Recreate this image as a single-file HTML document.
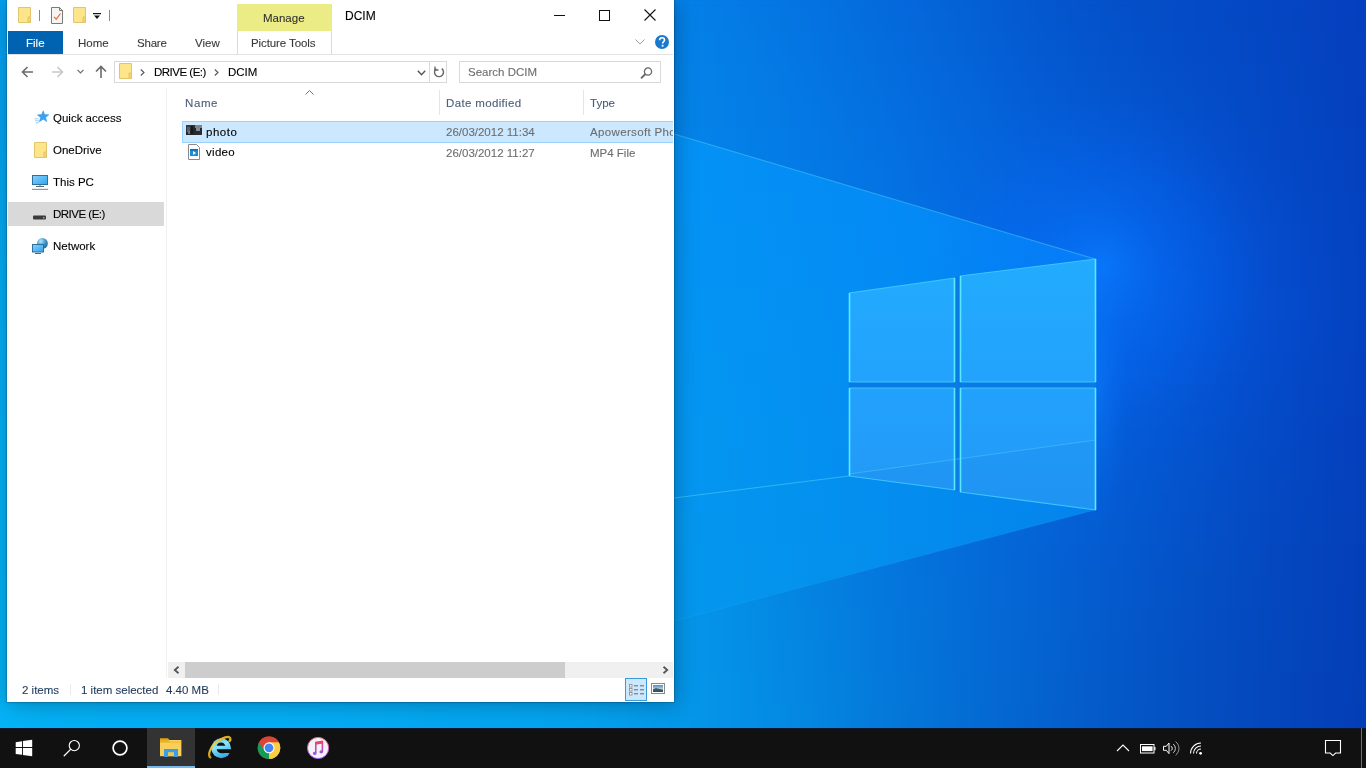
<!DOCTYPE html>
<html><head><meta charset="utf-8">
<style>
*{margin:0;padding:0;box-sizing:border-box}
html,body{width:1366px;height:768px;overflow:hidden;background:#0a7fe0}
body{position:relative;font-family:"Liberation Sans",sans-serif}
.a{position:absolute}
.t{position:absolute;font-family:"Liberation Sans",sans-serif;font-size:11.5px;line-height:14px;white-space:nowrap;-webkit-text-stroke:0.1px currentColor}
svg{position:absolute;overflow:visible}
</style></head><body>

<!-- WALLPAPER -->
<svg id="wp" class="a" style="left:0;top:0" width="1366" height="728" viewBox="0 0 1366 728">
<defs>
<filter id="bf" filterUnits="userSpaceOnUse" x="-100" y="-100" width="1600" height="950" color-interpolation-filters="sRGB"><feGaussianBlur color-interpolation-filters="sRGB" stdDeviation="16"/></filter>
<filter id="b1" filterUnits="userSpaceOnUse" x="-100" y="-100" width="1600" height="950" color-interpolation-filters="sRGB"><feGaussianBlur color-interpolation-filters="sRGB" stdDeviation="0.6"/></filter>
<clipPath id="clipC"><path d="M-10 -69 L1095 259 L1095 510 L674 621 L650 704 L-10 704 Z"/></clipPath>
<linearGradient id="pane" x1="0" y1="259" x2="0" y2="510" gradientUnits="userSpaceOnUse">
<stop offset="0" stop-color="#28acfe"/><stop offset="1" stop-color="#1e9ef8"/></linearGradient>
</defs>
<g filter="url(#bf)">
<rect x="-32" y="-32" width="32" height="32" fill="#04c0ff"/>
<rect x="0" y="-32" width="32" height="32" fill="#04bdff"/>
<rect x="32" y="-32" width="32" height="32" fill="#04baff"/>
<rect x="608" y="-32" width="32" height="32" fill="#0486ea"/>
<rect x="640" y="-32" width="32" height="32" fill="#0483e9"/>
<rect x="672" y="-32" width="32" height="32" fill="#047fe7"/>
<rect x="704" y="-32" width="32" height="32" fill="#047ce5"/>
<rect x="736" y="-32" width="32" height="32" fill="#0478e4"/>
<rect x="768" y="-32" width="32" height="32" fill="#0475e2"/>
<rect x="800" y="-32" width="32" height="32" fill="#0471e0"/>
<rect x="832" y="-32" width="32" height="32" fill="#046ede"/>
<rect x="864" y="-32" width="32" height="32" fill="#046adc"/>
<rect x="896" y="-32" width="32" height="32" fill="#0466da"/>
<rect x="928" y="-32" width="32" height="32" fill="#0462d7"/>
<rect x="960" y="-32" width="32" height="32" fill="#045ed4"/>
<rect x="992" y="-32" width="32" height="32" fill="#045bd1"/>
<rect x="1024" y="-32" width="32" height="32" fill="#0457ce"/>
<rect x="1056" y="-32" width="32" height="32" fill="#0453cb"/>
<rect x="1088" y="-32" width="32" height="32" fill="#0450c9"/>
<rect x="1120" y="-32" width="32" height="32" fill="#044ec7"/>
<rect x="1152" y="-32" width="32" height="32" fill="#044cc6"/>
<rect x="1184" y="-32" width="32" height="32" fill="#044ac5"/>
<rect x="1216" y="-32" width="32" height="32" fill="#0448c4"/>
<rect x="1248" y="-32" width="32" height="32" fill="#0546c3"/>
<rect x="1280" y="-32" width="32" height="32" fill="#0544c1"/>
<rect x="1312" y="-32" width="32" height="32" fill="#0542c0"/>
<rect x="1344" y="-32" width="32" height="32" fill="#053fbe"/>
<rect x="1376" y="-32" width="32" height="32" fill="#053dbd"/>
<rect x="-32" y="0" width="32" height="32" fill="#04c1ff"/>
<rect x="0" y="0" width="32" height="32" fill="#04beff"/>
<rect x="32" y="0" width="32" height="32" fill="#04bbff"/>
<rect x="608" y="0" width="32" height="32" fill="#0486ea"/>
<rect x="640" y="0" width="32" height="32" fill="#0483e9"/>
<rect x="672" y="0" width="32" height="32" fill="#0480e7"/>
<rect x="704" y="0" width="32" height="32" fill="#047de6"/>
<rect x="736" y="0" width="32" height="32" fill="#0479e4"/>
<rect x="768" y="0" width="32" height="32" fill="#0476e2"/>
<rect x="800" y="0" width="32" height="32" fill="#0473e1"/>
<rect x="832" y="0" width="32" height="32" fill="#046fdf"/>
<rect x="864" y="0" width="32" height="32" fill="#046bdd"/>
<rect x="896" y="0" width="32" height="32" fill="#0468db"/>
<rect x="928" y="0" width="32" height="32" fill="#0464d8"/>
<rect x="960" y="0" width="32" height="32" fill="#0460d5"/>
<rect x="992" y="0" width="32" height="32" fill="#045cd2"/>
<rect x="1024" y="0" width="32" height="32" fill="#0458cf"/>
<rect x="1056" y="0" width="32" height="32" fill="#0455cc"/>
<rect x="1088" y="0" width="32" height="32" fill="#0452ca"/>
<rect x="1120" y="0" width="32" height="32" fill="#044fc8"/>
<rect x="1152" y="0" width="32" height="32" fill="#044dc7"/>
<rect x="1184" y="0" width="32" height="32" fill="#044ac6"/>
<rect x="1216" y="0" width="32" height="32" fill="#0448c4"/>
<rect x="1248" y="0" width="32" height="32" fill="#0447c3"/>
<rect x="1280" y="0" width="32" height="32" fill="#0544c1"/>
<rect x="1312" y="0" width="32" height="32" fill="#0542c0"/>
<rect x="1344" y="0" width="32" height="32" fill="#053fbe"/>
<rect x="1376" y="0" width="32" height="32" fill="#053dbc"/>
<rect x="-32" y="32" width="32" height="32" fill="#04c1ff"/>
<rect x="0" y="32" width="32" height="32" fill="#04beff"/>
<rect x="32" y="32" width="32" height="32" fill="#04bbff"/>
<rect x="608" y="32" width="32" height="32" fill="#0487eb"/>
<rect x="640" y="32" width="32" height="32" fill="#0484e9"/>
<rect x="672" y="32" width="32" height="32" fill="#0481e8"/>
<rect x="704" y="32" width="32" height="32" fill="#047ee6"/>
<rect x="736" y="32" width="32" height="32" fill="#047be5"/>
<rect x="768" y="32" width="32" height="32" fill="#0477e3"/>
<rect x="800" y="32" width="32" height="32" fill="#0474e2"/>
<rect x="832" y="32" width="32" height="32" fill="#0470e0"/>
<rect x="864" y="32" width="32" height="32" fill="#046dde"/>
<rect x="896" y="32" width="32" height="32" fill="#0469dc"/>
<rect x="928" y="32" width="32" height="32" fill="#0465d9"/>
<rect x="960" y="32" width="32" height="32" fill="#0461d6"/>
<rect x="992" y="32" width="32" height="32" fill="#045dd4"/>
<rect x="1024" y="32" width="32" height="32" fill="#0459d1"/>
<rect x="1056" y="32" width="32" height="32" fill="#0456ce"/>
<rect x="1088" y="32" width="32" height="32" fill="#0453cc"/>
<rect x="1120" y="32" width="32" height="32" fill="#0450ca"/>
<rect x="1152" y="32" width="32" height="32" fill="#044ec8"/>
<rect x="1184" y="32" width="32" height="32" fill="#044bc7"/>
<rect x="1216" y="32" width="32" height="32" fill="#0449c5"/>
<rect x="1248" y="32" width="32" height="32" fill="#0447c3"/>
<rect x="1280" y="32" width="32" height="32" fill="#0445c2"/>
<rect x="1312" y="32" width="32" height="32" fill="#0542c0"/>
<rect x="1344" y="32" width="32" height="32" fill="#0540be"/>
<rect x="1376" y="32" width="32" height="32" fill="#053dbc"/>
<rect x="-32" y="64" width="32" height="32" fill="#04c1ff"/>
<rect x="0" y="64" width="32" height="32" fill="#04beff"/>
<rect x="32" y="64" width="32" height="32" fill="#04bbff"/>
<rect x="608" y="64" width="32" height="32" fill="#0488eb"/>
<rect x="640" y="64" width="32" height="32" fill="#0485e9"/>
<rect x="672" y="64" width="32" height="32" fill="#0482e8"/>
<rect x="704" y="64" width="32" height="32" fill="#047fe7"/>
<rect x="736" y="64" width="32" height="32" fill="#047ce5"/>
<rect x="768" y="64" width="32" height="32" fill="#0479e4"/>
<rect x="800" y="64" width="32" height="32" fill="#0475e3"/>
<rect x="832" y="64" width="32" height="32" fill="#0472e1"/>
<rect x="864" y="64" width="32" height="32" fill="#046edf"/>
<rect x="896" y="64" width="32" height="32" fill="#046bdd"/>
<rect x="928" y="64" width="32" height="32" fill="#0467db"/>
<rect x="960" y="64" width="32" height="32" fill="#0463d8"/>
<rect x="992" y="64" width="32" height="32" fill="#045fd6"/>
<rect x="1024" y="64" width="32" height="32" fill="#045bd3"/>
<rect x="1056" y="64" width="32" height="32" fill="#0458d0"/>
<rect x="1088" y="64" width="32" height="32" fill="#0455ce"/>
<rect x="1120" y="64" width="32" height="32" fill="#0452cc"/>
<rect x="1152" y="64" width="32" height="32" fill="#044fca"/>
<rect x="1184" y="64" width="32" height="32" fill="#044dc8"/>
<rect x="1216" y="64" width="32" height="32" fill="#044ac6"/>
<rect x="1248" y="64" width="32" height="32" fill="#0448c4"/>
<rect x="1280" y="64" width="32" height="32" fill="#0445c2"/>
<rect x="1312" y="64" width="32" height="32" fill="#0443c0"/>
<rect x="1344" y="64" width="32" height="32" fill="#0540be"/>
<rect x="1376" y="64" width="32" height="32" fill="#053dbc"/>
<rect x="-32" y="96" width="32" height="32" fill="#04c1ff"/>
<rect x="0" y="96" width="32" height="32" fill="#04beff"/>
<rect x="32" y="96" width="32" height="32" fill="#04bcff"/>
<rect x="608" y="96" width="32" height="32" fill="#0488eb"/>
<rect x="640" y="96" width="32" height="32" fill="#0486ea"/>
<rect x="672" y="96" width="32" height="32" fill="#0483e8"/>
<rect x="704" y="96" width="32" height="32" fill="#0480e7"/>
<rect x="736" y="96" width="32" height="32" fill="#047de6"/>
<rect x="768" y="96" width="32" height="32" fill="#047ae5"/>
<rect x="800" y="96" width="32" height="32" fill="#0477e4"/>
<rect x="832" y="96" width="32" height="32" fill="#0473e2"/>
<rect x="864" y="96" width="32" height="32" fill="#0470e1"/>
<rect x="896" y="96" width="32" height="32" fill="#046cdf"/>
<rect x="928" y="96" width="32" height="32" fill="#0468dd"/>
<rect x="960" y="96" width="32" height="32" fill="#0465da"/>
<rect x="992" y="96" width="32" height="32" fill="#0461d8"/>
<rect x="1024" y="96" width="32" height="32" fill="#045dd6"/>
<rect x="1056" y="96" width="32" height="32" fill="#045ad4"/>
<rect x="1088" y="96" width="32" height="32" fill="#0457d1"/>
<rect x="1120" y="96" width="32" height="32" fill="#0454cf"/>
<rect x="1152" y="96" width="32" height="32" fill="#0451cd"/>
<rect x="1184" y="96" width="32" height="32" fill="#044eca"/>
<rect x="1216" y="96" width="32" height="32" fill="#044bc8"/>
<rect x="1248" y="96" width="32" height="32" fill="#0448c5"/>
<rect x="1280" y="96" width="32" height="32" fill="#0446c3"/>
<rect x="1312" y="96" width="32" height="32" fill="#0443c0"/>
<rect x="1344" y="96" width="32" height="32" fill="#0440be"/>
<rect x="1376" y="96" width="32" height="32" fill="#043ebc"/>
<rect x="-32" y="128" width="32" height="32" fill="#04c2ff"/>
<rect x="0" y="128" width="32" height="32" fill="#04bfff"/>
<rect x="32" y="128" width="32" height="32" fill="#04bcff"/>
<rect x="608" y="128" width="32" height="32" fill="#0489eb"/>
<rect x="640" y="128" width="32" height="32" fill="#0486ea"/>
<rect x="672" y="128" width="32" height="32" fill="#0483e9"/>
<rect x="704" y="128" width="32" height="32" fill="#0481e8"/>
<rect x="736" y="128" width="32" height="32" fill="#047ee7"/>
<rect x="768" y="128" width="32" height="32" fill="#047be6"/>
<rect x="800" y="128" width="32" height="32" fill="#0478e5"/>
<rect x="832" y="128" width="32" height="32" fill="#0475e3"/>
<rect x="864" y="128" width="32" height="32" fill="#0471e2"/>
<rect x="896" y="128" width="32" height="32" fill="#046ee0"/>
<rect x="928" y="128" width="32" height="32" fill="#046ade"/>
<rect x="960" y="128" width="32" height="32" fill="#0466dc"/>
<rect x="992" y="128" width="32" height="32" fill="#0463db"/>
<rect x="1024" y="128" width="32" height="32" fill="#045fd9"/>
<rect x="1056" y="128" width="32" height="32" fill="#045cd7"/>
<rect x="1088" y="128" width="32" height="32" fill="#0459d5"/>
<rect x="1120" y="128" width="32" height="32" fill="#0456d3"/>
<rect x="1152" y="128" width="32" height="32" fill="#0453d0"/>
<rect x="1184" y="128" width="32" height="32" fill="#0450cd"/>
<rect x="1216" y="128" width="32" height="32" fill="#044cca"/>
<rect x="1248" y="128" width="32" height="32" fill="#0449c7"/>
<rect x="1280" y="128" width="32" height="32" fill="#0446c4"/>
<rect x="1312" y="128" width="32" height="32" fill="#0444c1"/>
<rect x="1344" y="128" width="32" height="32" fill="#0441be"/>
<rect x="1376" y="128" width="32" height="32" fill="#043ebc"/>
<rect x="-32" y="160" width="32" height="32" fill="#04c2ff"/>
<rect x="0" y="160" width="32" height="32" fill="#04bfff"/>
<rect x="32" y="160" width="32" height="32" fill="#04bcff"/>
<rect x="608" y="160" width="32" height="32" fill="#048aeb"/>
<rect x="640" y="160" width="32" height="32" fill="#0487ea"/>
<rect x="672" y="160" width="32" height="32" fill="#0484e9"/>
<rect x="704" y="160" width="32" height="32" fill="#0481e8"/>
<rect x="736" y="160" width="32" height="32" fill="#047fe7"/>
<rect x="768" y="160" width="32" height="32" fill="#047ce6"/>
<rect x="800" y="160" width="32" height="32" fill="#0479e5"/>
<rect x="832" y="160" width="32" height="32" fill="#0476e4"/>
<rect x="864" y="160" width="32" height="32" fill="#0473e3"/>
<rect x="896" y="160" width="32" height="32" fill="#046fe1"/>
<rect x="928" y="160" width="32" height="32" fill="#046be0"/>
<rect x="960" y="160" width="32" height="32" fill="#0468de"/>
<rect x="992" y="160" width="32" height="32" fill="#0464dd"/>
<rect x="1024" y="160" width="32" height="32" fill="#0461dc"/>
<rect x="1056" y="160" width="32" height="32" fill="#045edb"/>
<rect x="1088" y="160" width="32" height="32" fill="#045bda"/>
<rect x="1120" y="160" width="32" height="32" fill="#0458d7"/>
<rect x="1152" y="160" width="32" height="32" fill="#0455d4"/>
<rect x="1184" y="160" width="32" height="32" fill="#0451d1"/>
<rect x="1216" y="160" width="32" height="32" fill="#044ecd"/>
<rect x="1248" y="160" width="32" height="32" fill="#044ac9"/>
<rect x="1280" y="160" width="32" height="32" fill="#0447c5"/>
<rect x="1312" y="160" width="32" height="32" fill="#0444c2"/>
<rect x="1344" y="160" width="32" height="32" fill="#0441bf"/>
<rect x="1376" y="160" width="32" height="32" fill="#043ebc"/>
<rect x="-32" y="192" width="32" height="32" fill="#04c2ff"/>
<rect x="0" y="192" width="32" height="32" fill="#04bfff"/>
<rect x="32" y="192" width="32" height="32" fill="#04bcff"/>
<rect x="608" y="192" width="32" height="32" fill="#048aeb"/>
<rect x="640" y="192" width="32" height="32" fill="#0488ea"/>
<rect x="672" y="192" width="32" height="32" fill="#0485e9"/>
<rect x="704" y="192" width="32" height="32" fill="#0482e8"/>
<rect x="736" y="192" width="32" height="32" fill="#0480e8"/>
<rect x="768" y="192" width="32" height="32" fill="#047de7"/>
<rect x="800" y="192" width="32" height="32" fill="#047ae6"/>
<rect x="832" y="192" width="32" height="32" fill="#0477e5"/>
<rect x="864" y="192" width="32" height="32" fill="#0474e4"/>
<rect x="896" y="192" width="32" height="32" fill="#0470e2"/>
<rect x="928" y="192" width="32" height="32" fill="#046de1"/>
<rect x="960" y="192" width="32" height="32" fill="#0469e1"/>
<rect x="992" y="192" width="32" height="32" fill="#0466e0"/>
<rect x="1024" y="192" width="32" height="32" fill="#0463e0"/>
<rect x="1056" y="192" width="32" height="32" fill="#0461df"/>
<rect x="1088" y="192" width="32" height="32" fill="#045ede"/>
<rect x="1120" y="192" width="32" height="32" fill="#045adb"/>
<rect x="1152" y="192" width="32" height="32" fill="#0457d8"/>
<rect x="1184" y="192" width="32" height="32" fill="#0453d4"/>
<rect x="1216" y="192" width="32" height="32" fill="#044fcf"/>
<rect x="1248" y="192" width="32" height="32" fill="#044ccb"/>
<rect x="1280" y="192" width="32" height="32" fill="#0448c7"/>
<rect x="1312" y="192" width="32" height="32" fill="#0445c3"/>
<rect x="1344" y="192" width="32" height="32" fill="#0442bf"/>
<rect x="1376" y="192" width="32" height="32" fill="#043fbc"/>
<rect x="-32" y="224" width="32" height="32" fill="#04c3ff"/>
<rect x="0" y="224" width="32" height="32" fill="#04c0ff"/>
<rect x="32" y="224" width="32" height="32" fill="#04bdff"/>
<rect x="608" y="224" width="32" height="32" fill="#048beb"/>
<rect x="640" y="224" width="32" height="32" fill="#0488ea"/>
<rect x="672" y="224" width="32" height="32" fill="#0486ea"/>
<rect x="704" y="224" width="32" height="32" fill="#0483e9"/>
<rect x="736" y="224" width="32" height="32" fill="#0480e8"/>
<rect x="768" y="224" width="32" height="32" fill="#047ee7"/>
<rect x="800" y="224" width="32" height="32" fill="#047be6"/>
<rect x="832" y="224" width="32" height="32" fill="#0478e5"/>
<rect x="864" y="224" width="32" height="32" fill="#0474e4"/>
<rect x="896" y="224" width="32" height="32" fill="#0471e3"/>
<rect x="928" y="224" width="32" height="32" fill="#046ee3"/>
<rect x="960" y="224" width="32" height="32" fill="#046be3"/>
<rect x="992" y="224" width="32" height="32" fill="#0468e3"/>
<rect x="1024" y="224" width="32" height="32" fill="#0465e3"/>
<rect x="1056" y="224" width="32" height="32" fill="#0463e3"/>
<rect x="1088" y="224" width="32" height="32" fill="#0460e1"/>
<rect x="1120" y="224" width="32" height="32" fill="#045cdf"/>
<rect x="1152" y="224" width="32" height="32" fill="#0458db"/>
<rect x="1184" y="224" width="32" height="32" fill="#0454d7"/>
<rect x="1216" y="224" width="32" height="32" fill="#0451d2"/>
<rect x="1248" y="224" width="32" height="32" fill="#044dcd"/>
<rect x="1280" y="224" width="32" height="32" fill="#0449c8"/>
<rect x="1312" y="224" width="32" height="32" fill="#0445c4"/>
<rect x="1344" y="224" width="32" height="32" fill="#0442c0"/>
<rect x="1376" y="224" width="32" height="32" fill="#043fbd"/>
<rect x="-32" y="256" width="32" height="32" fill="#04c3ff"/>
<rect x="0" y="256" width="32" height="32" fill="#04c0ff"/>
<rect x="32" y="256" width="32" height="32" fill="#04bdff"/>
<rect x="608" y="256" width="32" height="32" fill="#048beb"/>
<rect x="640" y="256" width="32" height="32" fill="#0489ea"/>
<rect x="672" y="256" width="32" height="32" fill="#0486ea"/>
<rect x="704" y="256" width="32" height="32" fill="#0484e9"/>
<rect x="736" y="256" width="32" height="32" fill="#0481e8"/>
<rect x="768" y="256" width="32" height="32" fill="#047ee7"/>
<rect x="800" y="256" width="32" height="32" fill="#047be7"/>
<rect x="832" y="256" width="32" height="32" fill="#0478e6"/>
<rect x="864" y="256" width="32" height="32" fill="#0475e5"/>
<rect x="896" y="256" width="32" height="32" fill="#0472e4"/>
<rect x="928" y="256" width="32" height="32" fill="#046fe4"/>
<rect x="960" y="256" width="32" height="32" fill="#046ce5"/>
<rect x="992" y="256" width="32" height="32" fill="#046ae6"/>
<rect x="1024" y="256" width="32" height="32" fill="#0467e6"/>
<rect x="1056" y="256" width="32" height="32" fill="#0464e5"/>
<rect x="1088" y="256" width="32" height="32" fill="#0461e4"/>
<rect x="1120" y="256" width="32" height="32" fill="#045de1"/>
<rect x="1152" y="256" width="32" height="32" fill="#045add"/>
<rect x="1184" y="256" width="32" height="32" fill="#0456d9"/>
<rect x="1216" y="256" width="32" height="32" fill="#0451d4"/>
<rect x="1248" y="256" width="32" height="32" fill="#044dce"/>
<rect x="1280" y="256" width="32" height="32" fill="#0449c9"/>
<rect x="1312" y="256" width="32" height="32" fill="#0446c5"/>
<rect x="1344" y="256" width="32" height="32" fill="#0442c0"/>
<rect x="1376" y="256" width="32" height="32" fill="#043fbd"/>
<rect x="-32" y="288" width="32" height="32" fill="#04c3ff"/>
<rect x="0" y="288" width="32" height="32" fill="#04c0ff"/>
<rect x="32" y="288" width="32" height="32" fill="#04bdff"/>
<rect x="608" y="288" width="32" height="32" fill="#048ceb"/>
<rect x="640" y="288" width="32" height="32" fill="#0489ea"/>
<rect x="672" y="288" width="32" height="32" fill="#0487ea"/>
<rect x="704" y="288" width="32" height="32" fill="#0484e9"/>
<rect x="736" y="288" width="32" height="32" fill="#0481e8"/>
<rect x="768" y="288" width="32" height="32" fill="#047fe7"/>
<rect x="800" y="288" width="32" height="32" fill="#047ce7"/>
<rect x="832" y="288" width="32" height="32" fill="#0479e6"/>
<rect x="864" y="288" width="32" height="32" fill="#0476e5"/>
<rect x="896" y="288" width="32" height="32" fill="#0473e5"/>
<rect x="928" y="288" width="32" height="32" fill="#0470e6"/>
<rect x="960" y="288" width="32" height="32" fill="#046de7"/>
<rect x="992" y="288" width="32" height="32" fill="#046be8"/>
<rect x="1024" y="288" width="32" height="32" fill="#0468e8"/>
<rect x="1056" y="288" width="32" height="32" fill="#0465e6"/>
<rect x="1088" y="288" width="32" height="32" fill="#0462e4"/>
<rect x="1120" y="288" width="32" height="32" fill="#045ee1"/>
<rect x="1152" y="288" width="32" height="32" fill="#045add"/>
<rect x="1184" y="288" width="32" height="32" fill="#0456d9"/>
<rect x="1216" y="288" width="32" height="32" fill="#0452d4"/>
<rect x="1248" y="288" width="32" height="32" fill="#044ecf"/>
<rect x="1280" y="288" width="32" height="32" fill="#044aca"/>
<rect x="1312" y="288" width="32" height="32" fill="#0446c5"/>
<rect x="1344" y="288" width="32" height="32" fill="#0442c1"/>
<rect x="1376" y="288" width="32" height="32" fill="#043fbd"/>
<rect x="-32" y="320" width="32" height="32" fill="#04c3ff"/>
<rect x="0" y="320" width="32" height="32" fill="#04c0ff"/>
<rect x="32" y="320" width="32" height="32" fill="#04bdff"/>
<rect x="608" y="320" width="32" height="32" fill="#048ceb"/>
<rect x="640" y="320" width="32" height="32" fill="#0489ea"/>
<rect x="672" y="320" width="32" height="32" fill="#0487e9"/>
<rect x="704" y="320" width="32" height="32" fill="#0484e9"/>
<rect x="736" y="320" width="32" height="32" fill="#0482e8"/>
<rect x="768" y="320" width="32" height="32" fill="#047fe7"/>
<rect x="800" y="320" width="32" height="32" fill="#047ce6"/>
<rect x="832" y="320" width="32" height="32" fill="#0479e6"/>
<rect x="864" y="320" width="32" height="32" fill="#0476e5"/>
<rect x="896" y="320" width="32" height="32" fill="#0473e6"/>
<rect x="928" y="320" width="32" height="32" fill="#0470e7"/>
<rect x="960" y="320" width="32" height="32" fill="#046ee8"/>
<rect x="992" y="320" width="32" height="32" fill="#046be8"/>
<rect x="1024" y="320" width="32" height="32" fill="#0468e7"/>
<rect x="1056" y="320" width="32" height="32" fill="#0465e6"/>
<rect x="1088" y="320" width="32" height="32" fill="#0462e3"/>
<rect x="1120" y="320" width="32" height="32" fill="#045ee0"/>
<rect x="1152" y="320" width="32" height="32" fill="#045adc"/>
<rect x="1184" y="320" width="32" height="32" fill="#0456d8"/>
<rect x="1216" y="320" width="32" height="32" fill="#0451d3"/>
<rect x="1248" y="320" width="32" height="32" fill="#044dce"/>
<rect x="1280" y="320" width="32" height="32" fill="#0449c9"/>
<rect x="1312" y="320" width="32" height="32" fill="#0445c5"/>
<rect x="1344" y="320" width="32" height="32" fill="#0442c1"/>
<rect x="1376" y="320" width="32" height="32" fill="#043fbd"/>
<rect x="-32" y="352" width="32" height="32" fill="#04c3ff"/>
<rect x="0" y="352" width="32" height="32" fill="#04c0ff"/>
<rect x="32" y="352" width="32" height="32" fill="#04bdff"/>
<rect x="608" y="352" width="32" height="32" fill="#048dea"/>
<rect x="640" y="352" width="32" height="32" fill="#048bea"/>
<rect x="672" y="352" width="32" height="32" fill="#0488e9"/>
<rect x="704" y="352" width="32" height="32" fill="#0485e8"/>
<rect x="736" y="352" width="32" height="32" fill="#0482e7"/>
<rect x="768" y="352" width="32" height="32" fill="#047fe6"/>
<rect x="800" y="352" width="32" height="32" fill="#047ce6"/>
<rect x="832" y="352" width="32" height="32" fill="#0479e5"/>
<rect x="864" y="352" width="32" height="32" fill="#0476e5"/>
<rect x="896" y="352" width="32" height="32" fill="#0473e5"/>
<rect x="928" y="352" width="32" height="32" fill="#0470e6"/>
<rect x="960" y="352" width="32" height="32" fill="#046de6"/>
<rect x="992" y="352" width="32" height="32" fill="#046ae6"/>
<rect x="1024" y="352" width="32" height="32" fill="#0467e5"/>
<rect x="1056" y="352" width="32" height="32" fill="#0464e3"/>
<rect x="1088" y="352" width="32" height="32" fill="#0461e1"/>
<rect x="1120" y="352" width="32" height="32" fill="#045dde"/>
<rect x="1152" y="352" width="32" height="32" fill="#0459da"/>
<rect x="1184" y="352" width="32" height="32" fill="#0455d5"/>
<rect x="1216" y="352" width="32" height="32" fill="#0451d1"/>
<rect x="1248" y="352" width="32" height="32" fill="#044ccc"/>
<rect x="1280" y="352" width="32" height="32" fill="#0448c7"/>
<rect x="1312" y="352" width="32" height="32" fill="#0445c3"/>
<rect x="1344" y="352" width="32" height="32" fill="#0441c0"/>
<rect x="1376" y="352" width="32" height="32" fill="#043ebd"/>
<rect x="-32" y="384" width="32" height="32" fill="#04c1ff"/>
<rect x="0" y="384" width="32" height="32" fill="#04beff"/>
<rect x="32" y="384" width="32" height="32" fill="#04bbff"/>
<rect x="608" y="384" width="32" height="32" fill="#0491eb"/>
<rect x="640" y="384" width="32" height="32" fill="#048eea"/>
<rect x="672" y="384" width="32" height="32" fill="#048be9"/>
<rect x="704" y="384" width="32" height="32" fill="#0488e8"/>
<rect x="736" y="384" width="32" height="32" fill="#0484e6"/>
<rect x="768" y="384" width="32" height="32" fill="#0480e5"/>
<rect x="800" y="384" width="32" height="32" fill="#047de4"/>
<rect x="832" y="384" width="32" height="32" fill="#0479e3"/>
<rect x="864" y="384" width="32" height="32" fill="#0476e3"/>
<rect x="896" y="384" width="32" height="32" fill="#0473e3"/>
<rect x="928" y="384" width="32" height="32" fill="#046fe3"/>
<rect x="960" y="384" width="32" height="32" fill="#046ce3"/>
<rect x="992" y="384" width="32" height="32" fill="#0469e3"/>
<rect x="1024" y="384" width="32" height="32" fill="#0466e1"/>
<rect x="1056" y="384" width="32" height="32" fill="#0463e0"/>
<rect x="1088" y="384" width="32" height="32" fill="#045fdd"/>
<rect x="1120" y="384" width="32" height="32" fill="#045cda"/>
<rect x="1152" y="384" width="32" height="32" fill="#0458d6"/>
<rect x="1184" y="384" width="32" height="32" fill="#0454d2"/>
<rect x="1216" y="384" width="32" height="32" fill="#044fce"/>
<rect x="1248" y="384" width="32" height="32" fill="#044bc9"/>
<rect x="1280" y="384" width="32" height="32" fill="#0448c5"/>
<rect x="1312" y="384" width="32" height="32" fill="#0444c2"/>
<rect x="1344" y="384" width="32" height="32" fill="#0441bf"/>
<rect x="1376" y="384" width="32" height="32" fill="#043dbc"/>
<rect x="-32" y="416" width="32" height="32" fill="#04bdff"/>
<rect x="0" y="416" width="32" height="32" fill="#04baff"/>
<rect x="32" y="416" width="32" height="32" fill="#04b7fe"/>
<rect x="608" y="416" width="32" height="32" fill="#0494ec"/>
<rect x="640" y="416" width="32" height="32" fill="#0492eb"/>
<rect x="672" y="416" width="32" height="32" fill="#048ee9"/>
<rect x="704" y="416" width="32" height="32" fill="#048be8"/>
<rect x="736" y="416" width="32" height="32" fill="#0486e6"/>
<rect x="768" y="416" width="32" height="32" fill="#0482e4"/>
<rect x="800" y="416" width="32" height="32" fill="#047ee3"/>
<rect x="832" y="416" width="32" height="32" fill="#047ae2"/>
<rect x="864" y="416" width="32" height="32" fill="#0476e1"/>
<rect x="896" y="416" width="32" height="32" fill="#0472e0"/>
<rect x="928" y="416" width="32" height="32" fill="#046fe0"/>
<rect x="960" y="416" width="32" height="32" fill="#046ce0"/>
<rect x="992" y="416" width="32" height="32" fill="#0468df"/>
<rect x="1024" y="416" width="32" height="32" fill="#0465de"/>
<rect x="1056" y="416" width="32" height="32" fill="#0462dc"/>
<rect x="1088" y="416" width="32" height="32" fill="#045ed9"/>
<rect x="1120" y="416" width="32" height="32" fill="#045ad6"/>
<rect x="1152" y="416" width="32" height="32" fill="#0456d3"/>
<rect x="1184" y="416" width="32" height="32" fill="#0452cf"/>
<rect x="1216" y="416" width="32" height="32" fill="#044ecb"/>
<rect x="1248" y="416" width="32" height="32" fill="#044bc7"/>
<rect x="1280" y="416" width="32" height="32" fill="#0447c3"/>
<rect x="1312" y="416" width="32" height="32" fill="#0443c0"/>
<rect x="1344" y="416" width="32" height="32" fill="#0440be"/>
<rect x="1376" y="416" width="32" height="32" fill="#043dbb"/>
<rect x="-32" y="448" width="32" height="32" fill="#04b9fd"/>
<rect x="0" y="448" width="32" height="32" fill="#04b5fc"/>
<rect x="32" y="448" width="32" height="32" fill="#04b3fb"/>
<rect x="608" y="448" width="32" height="32" fill="#0497ed"/>
<rect x="640" y="448" width="32" height="32" fill="#0494eb"/>
<rect x="672" y="448" width="32" height="32" fill="#0491e9"/>
<rect x="704" y="448" width="32" height="32" fill="#048de8"/>
<rect x="736" y="448" width="32" height="32" fill="#0488e6"/>
<rect x="768" y="448" width="32" height="32" fill="#0483e4"/>
<rect x="800" y="448" width="32" height="32" fill="#047fe2"/>
<rect x="832" y="448" width="32" height="32" fill="#047ae1"/>
<rect x="864" y="448" width="32" height="32" fill="#0476e0"/>
<rect x="896" y="448" width="32" height="32" fill="#0472df"/>
<rect x="928" y="448" width="32" height="32" fill="#046fde"/>
<rect x="960" y="448" width="32" height="32" fill="#046bdd"/>
<rect x="992" y="448" width="32" height="32" fill="#0468dc"/>
<rect x="1024" y="448" width="32" height="32" fill="#0464da"/>
<rect x="1056" y="448" width="32" height="32" fill="#0461d8"/>
<rect x="1088" y="448" width="32" height="32" fill="#045dd6"/>
<rect x="1120" y="448" width="32" height="32" fill="#0459d3"/>
<rect x="1152" y="448" width="32" height="32" fill="#0455d0"/>
<rect x="1184" y="448" width="32" height="32" fill="#0452cc"/>
<rect x="1216" y="448" width="32" height="32" fill="#044ec8"/>
<rect x="1248" y="448" width="32" height="32" fill="#044ac5"/>
<rect x="1280" y="448" width="32" height="32" fill="#0447c2"/>
<rect x="1312" y="448" width="32" height="32" fill="#0443bf"/>
<rect x="1344" y="448" width="32" height="32" fill="#0440bc"/>
<rect x="1376" y="448" width="32" height="32" fill="#043dba"/>
<rect x="-32" y="480" width="32" height="32" fill="#04b5fb"/>
<rect x="0" y="480" width="32" height="32" fill="#04b3f9"/>
<rect x="32" y="480" width="32" height="32" fill="#04b0f8"/>
<rect x="608" y="480" width="32" height="32" fill="#0499ed"/>
<rect x="640" y="480" width="32" height="32" fill="#0496eb"/>
<rect x="672" y="480" width="32" height="32" fill="#0492ea"/>
<rect x="704" y="480" width="32" height="32" fill="#048ee8"/>
<rect x="736" y="480" width="32" height="32" fill="#0489e6"/>
<rect x="768" y="480" width="32" height="32" fill="#0484e4"/>
<rect x="800" y="480" width="32" height="32" fill="#047fe2"/>
<rect x="832" y="480" width="32" height="32" fill="#047be0"/>
<rect x="864" y="480" width="32" height="32" fill="#0477df"/>
<rect x="896" y="480" width="32" height="32" fill="#0473dd"/>
<rect x="928" y="480" width="32" height="32" fill="#046fdc"/>
<rect x="960" y="480" width="32" height="32" fill="#046bdb"/>
<rect x="992" y="480" width="32" height="32" fill="#0467d9"/>
<rect x="1024" y="480" width="32" height="32" fill="#0464d8"/>
<rect x="1056" y="480" width="32" height="32" fill="#0460d6"/>
<rect x="1088" y="480" width="32" height="32" fill="#045cd3"/>
<rect x="1120" y="480" width="32" height="32" fill="#0458d0"/>
<rect x="1152" y="480" width="32" height="32" fill="#0455cd"/>
<rect x="1184" y="480" width="32" height="32" fill="#0451ca"/>
<rect x="1216" y="480" width="32" height="32" fill="#044dc6"/>
<rect x="1248" y="480" width="32" height="32" fill="#044ac3"/>
<rect x="1280" y="480" width="32" height="32" fill="#0446c0"/>
<rect x="1312" y="480" width="32" height="32" fill="#0443be"/>
<rect x="1344" y="480" width="32" height="32" fill="#0440bb"/>
<rect x="1376" y="480" width="32" height="32" fill="#043db9"/>
<rect x="-32" y="512" width="32" height="32" fill="#04b4f9"/>
<rect x="0" y="512" width="32" height="32" fill="#04b1f8"/>
<rect x="32" y="512" width="32" height="32" fill="#04aff7"/>
<rect x="608" y="512" width="32" height="32" fill="#049aed"/>
<rect x="640" y="512" width="32" height="32" fill="#0497eb"/>
<rect x="672" y="512" width="32" height="32" fill="#0493e9"/>
<rect x="704" y="512" width="32" height="32" fill="#048fe8"/>
<rect x="736" y="512" width="32" height="32" fill="#048ae6"/>
<rect x="768" y="512" width="32" height="32" fill="#0485e4"/>
<rect x="800" y="512" width="32" height="32" fill="#0480e2"/>
<rect x="832" y="512" width="32" height="32" fill="#047ce0"/>
<rect x="864" y="512" width="32" height="32" fill="#0477de"/>
<rect x="896" y="512" width="32" height="32" fill="#0473dd"/>
<rect x="928" y="512" width="32" height="32" fill="#046fdb"/>
<rect x="960" y="512" width="32" height="32" fill="#046bd9"/>
<rect x="992" y="512" width="32" height="32" fill="#0467d8"/>
<rect x="1024" y="512" width="32" height="32" fill="#0464d6"/>
<rect x="1056" y="512" width="32" height="32" fill="#0460d4"/>
<rect x="1088" y="512" width="32" height="32" fill="#045cd1"/>
<rect x="1120" y="512" width="32" height="32" fill="#0458ce"/>
<rect x="1152" y="512" width="32" height="32" fill="#0454cb"/>
<rect x="1184" y="512" width="32" height="32" fill="#0450c8"/>
<rect x="1216" y="512" width="32" height="32" fill="#044dc5"/>
<rect x="1248" y="512" width="32" height="32" fill="#0449c2"/>
<rect x="1280" y="512" width="32" height="32" fill="#0446bf"/>
<rect x="1312" y="512" width="32" height="32" fill="#0443bd"/>
<rect x="1344" y="512" width="32" height="32" fill="#0440ba"/>
<rect x="1376" y="512" width="32" height="32" fill="#043db9"/>
<rect x="-32" y="544" width="32" height="32" fill="#04b3f8"/>
<rect x="0" y="544" width="32" height="32" fill="#04b1f7"/>
<rect x="32" y="544" width="32" height="32" fill="#04aff6"/>
<rect x="608" y="544" width="32" height="32" fill="#049bed"/>
<rect x="640" y="544" width="32" height="32" fill="#0497eb"/>
<rect x="672" y="544" width="32" height="32" fill="#0494e9"/>
<rect x="704" y="544" width="32" height="32" fill="#0490e8"/>
<rect x="736" y="544" width="32" height="32" fill="#048be6"/>
<rect x="768" y="544" width="32" height="32" fill="#0486e4"/>
<rect x="800" y="544" width="32" height="32" fill="#0481e2"/>
<rect x="832" y="544" width="32" height="32" fill="#047ce0"/>
<rect x="864" y="544" width="32" height="32" fill="#0478de"/>
<rect x="896" y="544" width="32" height="32" fill="#0473dc"/>
<rect x="928" y="544" width="32" height="32" fill="#046fda"/>
<rect x="960" y="544" width="32" height="32" fill="#046bd8"/>
<rect x="992" y="544" width="32" height="32" fill="#0467d6"/>
<rect x="1024" y="544" width="32" height="32" fill="#0463d4"/>
<rect x="1056" y="544" width="32" height="32" fill="#045fd2"/>
<rect x="1088" y="544" width="32" height="32" fill="#045bcf"/>
<rect x="1120" y="544" width="32" height="32" fill="#0457cc"/>
<rect x="1152" y="544" width="32" height="32" fill="#0453c9"/>
<rect x="1184" y="544" width="32" height="32" fill="#0450c6"/>
<rect x="1216" y="544" width="32" height="32" fill="#044cc3"/>
<rect x="1248" y="544" width="32" height="32" fill="#0449c0"/>
<rect x="1280" y="544" width="32" height="32" fill="#0445be"/>
<rect x="1312" y="544" width="32" height="32" fill="#0442bb"/>
<rect x="1344" y="544" width="32" height="32" fill="#043fb9"/>
<rect x="1376" y="544" width="32" height="32" fill="#043cb8"/>
<rect x="-32" y="576" width="32" height="32" fill="#04b3f7"/>
<rect x="0" y="576" width="32" height="32" fill="#04b1f6"/>
<rect x="32" y="576" width="32" height="32" fill="#04aff6"/>
<rect x="608" y="576" width="32" height="32" fill="#049ced"/>
<rect x="640" y="576" width="32" height="32" fill="#0498eb"/>
<rect x="672" y="576" width="32" height="32" fill="#0494e9"/>
<rect x="704" y="576" width="32" height="32" fill="#0490e7"/>
<rect x="736" y="576" width="32" height="32" fill="#048ce5"/>
<rect x="768" y="576" width="32" height="32" fill="#0487e3"/>
<rect x="800" y="576" width="32" height="32" fill="#0482e1"/>
<rect x="832" y="576" width="32" height="32" fill="#047ddf"/>
<rect x="864" y="576" width="32" height="32" fill="#0478dd"/>
<rect x="896" y="576" width="32" height="32" fill="#0474db"/>
<rect x="928" y="576" width="32" height="32" fill="#0470d9"/>
<rect x="960" y="576" width="32" height="32" fill="#046bd7"/>
<rect x="992" y="576" width="32" height="32" fill="#0467d5"/>
<rect x="1024" y="576" width="32" height="32" fill="#0463d3"/>
<rect x="1056" y="576" width="32" height="32" fill="#045fd0"/>
<rect x="1088" y="576" width="32" height="32" fill="#045bcd"/>
<rect x="1120" y="576" width="32" height="32" fill="#0457ca"/>
<rect x="1152" y="576" width="32" height="32" fill="#0453c7"/>
<rect x="1184" y="576" width="32" height="32" fill="#044fc4"/>
<rect x="1216" y="576" width="32" height="32" fill="#044cc1"/>
<rect x="1248" y="576" width="32" height="32" fill="#0448bf"/>
<rect x="1280" y="576" width="32" height="32" fill="#0445bd"/>
<rect x="1312" y="576" width="32" height="32" fill="#0442ba"/>
<rect x="1344" y="576" width="32" height="32" fill="#043fb8"/>
<rect x="1376" y="576" width="32" height="32" fill="#043cb7"/>
<rect x="-32" y="608" width="32" height="32" fill="#04b3f7"/>
<rect x="0" y="608" width="32" height="32" fill="#04b1f6"/>
<rect x="32" y="608" width="32" height="32" fill="#04aff5"/>
<rect x="608" y="608" width="32" height="32" fill="#049ced"/>
<rect x="640" y="608" width="32" height="32" fill="#0499eb"/>
<rect x="672" y="608" width="32" height="32" fill="#0495e9"/>
<rect x="704" y="608" width="32" height="32" fill="#0491e7"/>
<rect x="736" y="608" width="32" height="32" fill="#048de5"/>
<rect x="768" y="608" width="32" height="32" fill="#0488e3"/>
<rect x="800" y="608" width="32" height="32" fill="#0483e1"/>
<rect x="832" y="608" width="32" height="32" fill="#047edf"/>
<rect x="864" y="608" width="32" height="32" fill="#0479dd"/>
<rect x="896" y="608" width="32" height="32" fill="#0474da"/>
<rect x="928" y="608" width="32" height="32" fill="#0470d8"/>
<rect x="960" y="608" width="32" height="32" fill="#046bd6"/>
<rect x="992" y="608" width="32" height="32" fill="#0467d4"/>
<rect x="1024" y="608" width="32" height="32" fill="#0463d2"/>
<rect x="1056" y="608" width="32" height="32" fill="#045fcf"/>
<rect x="1088" y="608" width="32" height="32" fill="#045bcc"/>
<rect x="1120" y="608" width="32" height="32" fill="#0456c9"/>
<rect x="1152" y="608" width="32" height="32" fill="#0452c6"/>
<rect x="1184" y="608" width="32" height="32" fill="#044fc3"/>
<rect x="1216" y="608" width="32" height="32" fill="#044bc0"/>
<rect x="1248" y="608" width="32" height="32" fill="#0448be"/>
<rect x="1280" y="608" width="32" height="32" fill="#0445bc"/>
<rect x="1312" y="608" width="32" height="32" fill="#0442ba"/>
<rect x="1344" y="608" width="32" height="32" fill="#043fb8"/>
<rect x="1376" y="608" width="32" height="32" fill="#043cb6"/>
<rect x="-32" y="640" width="32" height="32" fill="#04b3f6"/>
<rect x="0" y="640" width="32" height="32" fill="#04b1f6"/>
<rect x="32" y="640" width="32" height="32" fill="#04aff5"/>
<rect x="64" y="640" width="32" height="32" fill="#04aef5"/>
<rect x="96" y="640" width="32" height="32" fill="#04adf5"/>
<rect x="128" y="640" width="32" height="32" fill="#04adf5"/>
<rect x="160" y="640" width="32" height="32" fill="#04adf5"/>
<rect x="192" y="640" width="32" height="32" fill="#04aef5"/>
<rect x="224" y="640" width="32" height="32" fill="#04aef6"/>
<rect x="256" y="640" width="32" height="32" fill="#04adf5"/>
<rect x="288" y="640" width="32" height="32" fill="#04acf5"/>
<rect x="320" y="640" width="32" height="32" fill="#04abf4"/>
<rect x="352" y="640" width="32" height="32" fill="#04aaf4"/>
<rect x="384" y="640" width="32" height="32" fill="#04a8f3"/>
<rect x="416" y="640" width="32" height="32" fill="#04a6f2"/>
<rect x="448" y="640" width="32" height="32" fill="#04a5f1"/>
<rect x="480" y="640" width="32" height="32" fill="#04a5f1"/>
<rect x="512" y="640" width="32" height="32" fill="#04a4f0"/>
<rect x="544" y="640" width="32" height="32" fill="#04a2f0"/>
<rect x="576" y="640" width="32" height="32" fill="#04a0ee"/>
<rect x="608" y="640" width="32" height="32" fill="#049ded"/>
<rect x="640" y="640" width="32" height="32" fill="#0499eb"/>
<rect x="672" y="640" width="32" height="32" fill="#0495e9"/>
<rect x="704" y="640" width="32" height="32" fill="#0491e7"/>
<rect x="736" y="640" width="32" height="32" fill="#048de5"/>
<rect x="768" y="640" width="32" height="32" fill="#0489e3"/>
<rect x="800" y="640" width="32" height="32" fill="#0484e1"/>
<rect x="832" y="640" width="32" height="32" fill="#047edf"/>
<rect x="864" y="640" width="32" height="32" fill="#0479dc"/>
<rect x="896" y="640" width="32" height="32" fill="#0474da"/>
<rect x="928" y="640" width="32" height="32" fill="#0470d7"/>
<rect x="960" y="640" width="32" height="32" fill="#046bd5"/>
<rect x="992" y="640" width="32" height="32" fill="#0467d3"/>
<rect x="1024" y="640" width="32" height="32" fill="#0463d0"/>
<rect x="1056" y="640" width="32" height="32" fill="#045fcd"/>
<rect x="1088" y="640" width="32" height="32" fill="#045aca"/>
<rect x="1120" y="640" width="32" height="32" fill="#0456c7"/>
<rect x="1152" y="640" width="32" height="32" fill="#0452c4"/>
<rect x="1184" y="640" width="32" height="32" fill="#044ec2"/>
<rect x="1216" y="640" width="32" height="32" fill="#044bbf"/>
<rect x="1248" y="640" width="32" height="32" fill="#0448bd"/>
<rect x="1280" y="640" width="32" height="32" fill="#0445bb"/>
<rect x="1312" y="640" width="32" height="32" fill="#0442b9"/>
<rect x="1344" y="640" width="32" height="32" fill="#043fb7"/>
<rect x="1376" y="640" width="32" height="32" fill="#043cb5"/>
<rect x="-32" y="672" width="32" height="32" fill="#04b4f6"/>
<rect x="0" y="672" width="32" height="32" fill="#04b2f5"/>
<rect x="32" y="672" width="32" height="32" fill="#04b0f5"/>
<rect x="64" y="672" width="32" height="32" fill="#04aff4"/>
<rect x="96" y="672" width="32" height="32" fill="#04aef4"/>
<rect x="128" y="672" width="32" height="32" fill="#04aef4"/>
<rect x="160" y="672" width="32" height="32" fill="#04aef5"/>
<rect x="192" y="672" width="32" height="32" fill="#04aef5"/>
<rect x="224" y="672" width="32" height="32" fill="#04aef5"/>
<rect x="256" y="672" width="32" height="32" fill="#04aef5"/>
<rect x="288" y="672" width="32" height="32" fill="#04adf5"/>
<rect x="320" y="672" width="32" height="32" fill="#04acf4"/>
<rect x="352" y="672" width="32" height="32" fill="#04aaf3"/>
<rect x="384" y="672" width="32" height="32" fill="#04a8f2"/>
<rect x="416" y="672" width="32" height="32" fill="#04a7f2"/>
<rect x="448" y="672" width="32" height="32" fill="#04a6f1"/>
<rect x="480" y="672" width="32" height="32" fill="#04a5f1"/>
<rect x="512" y="672" width="32" height="32" fill="#04a4f0"/>
<rect x="544" y="672" width="32" height="32" fill="#04a3ef"/>
<rect x="576" y="672" width="32" height="32" fill="#04a0ee"/>
<rect x="608" y="672" width="32" height="32" fill="#049dec"/>
<rect x="640" y="672" width="32" height="32" fill="#049aeb"/>
<rect x="672" y="672" width="32" height="32" fill="#0496e9"/>
<rect x="704" y="672" width="32" height="32" fill="#0492e7"/>
<rect x="736" y="672" width="32" height="32" fill="#048ee5"/>
<rect x="768" y="672" width="32" height="32" fill="#0489e3"/>
<rect x="800" y="672" width="32" height="32" fill="#0484e1"/>
<rect x="832" y="672" width="32" height="32" fill="#047fde"/>
<rect x="864" y="672" width="32" height="32" fill="#047adc"/>
<rect x="896" y="672" width="32" height="32" fill="#0475d9"/>
<rect x="928" y="672" width="32" height="32" fill="#0470d7"/>
<rect x="960" y="672" width="32" height="32" fill="#046bd4"/>
<rect x="992" y="672" width="32" height="32" fill="#0467d2"/>
<rect x="1024" y="672" width="32" height="32" fill="#0463cf"/>
<rect x="1056" y="672" width="32" height="32" fill="#045ecc"/>
<rect x="1088" y="672" width="32" height="32" fill="#045ac9"/>
<rect x="1120" y="672" width="32" height="32" fill="#0456c6"/>
<rect x="1152" y="672" width="32" height="32" fill="#0452c3"/>
<rect x="1184" y="672" width="32" height="32" fill="#044ec1"/>
<rect x="1216" y="672" width="32" height="32" fill="#044bbe"/>
<rect x="1248" y="672" width="32" height="32" fill="#0447bc"/>
<rect x="1280" y="672" width="32" height="32" fill="#0444ba"/>
<rect x="1312" y="672" width="32" height="32" fill="#0441b8"/>
<rect x="1344" y="672" width="32" height="32" fill="#043fb6"/>
<rect x="1376" y="672" width="32" height="32" fill="#043cb5"/>
<rect x="-32" y="704" width="32" height="32" fill="#04b4f6"/>
<rect x="0" y="704" width="32" height="32" fill="#04b2f5"/>
<rect x="32" y="704" width="32" height="32" fill="#04b0f5"/>
<rect x="64" y="704" width="32" height="32" fill="#04aff4"/>
<rect x="96" y="704" width="32" height="32" fill="#04aef4"/>
<rect x="128" y="704" width="32" height="32" fill="#04aef4"/>
<rect x="160" y="704" width="32" height="32" fill="#04aef5"/>
<rect x="192" y="704" width="32" height="32" fill="#04aef5"/>
<rect x="224" y="704" width="32" height="32" fill="#04aef5"/>
<rect x="256" y="704" width="32" height="32" fill="#04aef5"/>
<rect x="288" y="704" width="32" height="32" fill="#04adf4"/>
<rect x="320" y="704" width="32" height="32" fill="#04acf4"/>
<rect x="352" y="704" width="32" height="32" fill="#04aaf3"/>
<rect x="384" y="704" width="32" height="32" fill="#04a9f2"/>
<rect x="416" y="704" width="32" height="32" fill="#04a7f1"/>
<rect x="448" y="704" width="32" height="32" fill="#04a6f1"/>
<rect x="480" y="704" width="32" height="32" fill="#04a5f0"/>
<rect x="512" y="704" width="32" height="32" fill="#04a4f0"/>
<rect x="544" y="704" width="32" height="32" fill="#04a3ef"/>
<rect x="576" y="704" width="32" height="32" fill="#04a1ee"/>
<rect x="608" y="704" width="32" height="32" fill="#049eec"/>
<rect x="640" y="704" width="32" height="32" fill="#049aea"/>
<rect x="672" y="704" width="32" height="32" fill="#0496e9"/>
<rect x="704" y="704" width="32" height="32" fill="#0492e7"/>
<rect x="736" y="704" width="32" height="32" fill="#048ee5"/>
<rect x="768" y="704" width="32" height="32" fill="#048ae3"/>
<rect x="800" y="704" width="32" height="32" fill="#0485e0"/>
<rect x="832" y="704" width="32" height="32" fill="#047fde"/>
<rect x="864" y="704" width="32" height="32" fill="#047adb"/>
<rect x="896" y="704" width="32" height="32" fill="#0475d8"/>
<rect x="928" y="704" width="32" height="32" fill="#0470d6"/>
<rect x="960" y="704" width="32" height="32" fill="#046bd3"/>
<rect x="992" y="704" width="32" height="32" fill="#0467d1"/>
<rect x="1024" y="704" width="32" height="32" fill="#0462ce"/>
<rect x="1056" y="704" width="32" height="32" fill="#045ecb"/>
<rect x="1088" y="704" width="32" height="32" fill="#045ac8"/>
<rect x="1120" y="704" width="32" height="32" fill="#0456c5"/>
<rect x="1152" y="704" width="32" height="32" fill="#0452c3"/>
<rect x="1184" y="704" width="32" height="32" fill="#044ec0"/>
<rect x="1216" y="704" width="32" height="32" fill="#044bbe"/>
<rect x="1248" y="704" width="32" height="32" fill="#0447bc"/>
<rect x="1280" y="704" width="32" height="32" fill="#0444ba"/>
<rect x="1312" y="704" width="32" height="32" fill="#0441b8"/>
<rect x="1344" y="704" width="32" height="32" fill="#043eb6"/>
<rect x="1376" y="704" width="32" height="32" fill="#043cb4"/>
<rect x="-32" y="736" width="32" height="32" fill="#04b5f6"/>
<rect x="0" y="736" width="32" height="32" fill="#04b3f5"/>
<rect x="32" y="736" width="32" height="32" fill="#04b1f4"/>
<rect x="64" y="736" width="32" height="32" fill="#04b0f4"/>
<rect x="96" y="736" width="32" height="32" fill="#04aff4"/>
<rect x="128" y="736" width="32" height="32" fill="#04aef4"/>
<rect x="160" y="736" width="32" height="32" fill="#04aff4"/>
<rect x="192" y="736" width="32" height="32" fill="#04aff5"/>
<rect x="224" y="736" width="32" height="32" fill="#04aff5"/>
<rect x="256" y="736" width="32" height="32" fill="#04aef4"/>
<rect x="288" y="736" width="32" height="32" fill="#04adf4"/>
<rect x="320" y="736" width="32" height="32" fill="#04acf3"/>
<rect x="352" y="736" width="32" height="32" fill="#04abf3"/>
<rect x="384" y="736" width="32" height="32" fill="#04a9f2"/>
<rect x="416" y="736" width="32" height="32" fill="#04a7f1"/>
<rect x="448" y="736" width="32" height="32" fill="#04a6f0"/>
<rect x="480" y="736" width="32" height="32" fill="#04a5f0"/>
<rect x="512" y="736" width="32" height="32" fill="#04a5f0"/>
<rect x="544" y="736" width="32" height="32" fill="#04a3ef"/>
<rect x="576" y="736" width="32" height="32" fill="#04a1ee"/>
<rect x="608" y="736" width="32" height="32" fill="#049eec"/>
<rect x="640" y="736" width="32" height="32" fill="#049bea"/>
<rect x="672" y="736" width="32" height="32" fill="#0497e8"/>
<rect x="704" y="736" width="32" height="32" fill="#0493e7"/>
<rect x="736" y="736" width="32" height="32" fill="#048fe5"/>
<rect x="768" y="736" width="32" height="32" fill="#048ae3"/>
<rect x="800" y="736" width="32" height="32" fill="#0485e0"/>
<rect x="832" y="736" width="32" height="32" fill="#0480de"/>
<rect x="864" y="736" width="32" height="32" fill="#047adb"/>
<rect x="896" y="736" width="32" height="32" fill="#0475d8"/>
<rect x="928" y="736" width="32" height="32" fill="#0470d5"/>
<rect x="960" y="736" width="32" height="32" fill="#046bd2"/>
<rect x="992" y="736" width="32" height="32" fill="#0467d0"/>
<rect x="1024" y="736" width="32" height="32" fill="#0462cd"/>
<rect x="1056" y="736" width="32" height="32" fill="#045eca"/>
<rect x="1088" y="736" width="32" height="32" fill="#045ac7"/>
<rect x="1120" y="736" width="32" height="32" fill="#0455c5"/>
<rect x="1152" y="736" width="32" height="32" fill="#0452c2"/>
<rect x="1184" y="736" width="32" height="32" fill="#044ec0"/>
<rect x="1216" y="736" width="32" height="32" fill="#044bbd"/>
<rect x="1248" y="736" width="32" height="32" fill="#0447bb"/>
<rect x="1280" y="736" width="32" height="32" fill="#0444b9"/>
<rect x="1312" y="736" width="32" height="32" fill="#0441b7"/>
<rect x="1344" y="736" width="32" height="32" fill="#043fb6"/>
<rect x="1376" y="736" width="32" height="32" fill="#043cb4"/>
</g>
<g clip-path="url(#clipC)"><g filter="url(#bf)">
<rect x="-32" y="-32" width="32" height="32" fill="#049eed"/>
<rect x="0" y="-32" width="32" height="32" fill="#049ded"/>
<rect x="32" y="-32" width="32" height="32" fill="#049ced"/>
<rect x="608" y="-32" width="32" height="32" fill="#0490f6"/>
<rect x="640" y="-32" width="32" height="32" fill="#048ff7"/>
<rect x="672" y="-32" width="32" height="32" fill="#048ef7"/>
<rect x="704" y="-32" width="32" height="32" fill="#048cf7"/>
<rect x="736" y="-32" width="32" height="32" fill="#048bf7"/>
<rect x="768" y="-32" width="32" height="32" fill="#048af7"/>
<rect x="800" y="-32" width="32" height="32" fill="#0489f7"/>
<rect x="832" y="-32" width="32" height="32" fill="#0488f7"/>
<rect x="864" y="-32" width="32" height="32" fill="#0487f8"/>
<rect x="896" y="-32" width="32" height="32" fill="#0485f8"/>
<rect x="928" y="-32" width="32" height="32" fill="#0484f8"/>
<rect x="960" y="-32" width="32" height="32" fill="#0483f8"/>
<rect x="992" y="-32" width="32" height="32" fill="#0482f8"/>
<rect x="1024" y="-32" width="32" height="32" fill="#0481f8"/>
<rect x="1056" y="-32" width="32" height="32" fill="#0480f8"/>
<rect x="1088" y="-32" width="32" height="32" fill="#047ff8"/>
<rect x="1120" y="-32" width="32" height="32" fill="#047ef8"/>
<rect x="1152" y="-32" width="32" height="32" fill="#047df8"/>
<rect x="1184" y="-32" width="32" height="32" fill="#047cf8"/>
<rect x="1216" y="-32" width="32" height="32" fill="#047bf8"/>
<rect x="1248" y="-32" width="32" height="32" fill="#047af8"/>
<rect x="1280" y="-32" width="32" height="32" fill="#0479f7"/>
<rect x="1312" y="-32" width="32" height="32" fill="#0478f7"/>
<rect x="1344" y="-32" width="32" height="32" fill="#0477f7"/>
<rect x="1376" y="-32" width="32" height="32" fill="#0475f7"/>
<rect x="-32" y="0" width="32" height="32" fill="#049fed"/>
<rect x="0" y="0" width="32" height="32" fill="#049eed"/>
<rect x="32" y="0" width="32" height="32" fill="#049ded"/>
<rect x="608" y="0" width="32" height="32" fill="#0491f6"/>
<rect x="640" y="0" width="32" height="32" fill="#0490f6"/>
<rect x="672" y="0" width="32" height="32" fill="#048ef6"/>
<rect x="704" y="0" width="32" height="32" fill="#048df7"/>
<rect x="736" y="0" width="32" height="32" fill="#048cf7"/>
<rect x="768" y="0" width="32" height="32" fill="#048bf7"/>
<rect x="800" y="0" width="32" height="32" fill="#048af7"/>
<rect x="832" y="0" width="32" height="32" fill="#0488f7"/>
<rect x="864" y="0" width="32" height="32" fill="#0487f7"/>
<rect x="896" y="0" width="32" height="32" fill="#0486f8"/>
<rect x="928" y="0" width="32" height="32" fill="#0485f8"/>
<rect x="960" y="0" width="32" height="32" fill="#0484f8"/>
<rect x="992" y="0" width="32" height="32" fill="#0483f8"/>
<rect x="1024" y="0" width="32" height="32" fill="#0482f8"/>
<rect x="1056" y="0" width="32" height="32" fill="#0481f8"/>
<rect x="1088" y="0" width="32" height="32" fill="#0480f8"/>
<rect x="1120" y="0" width="32" height="32" fill="#047ff8"/>
<rect x="1152" y="0" width="32" height="32" fill="#047ef8"/>
<rect x="1184" y="0" width="32" height="32" fill="#047df8"/>
<rect x="1216" y="0" width="32" height="32" fill="#047bf8"/>
<rect x="1248" y="0" width="32" height="32" fill="#047af8"/>
<rect x="1280" y="0" width="32" height="32" fill="#0479f8"/>
<rect x="1312" y="0" width="32" height="32" fill="#0478f7"/>
<rect x="1344" y="0" width="32" height="32" fill="#0477f7"/>
<rect x="1376" y="0" width="32" height="32" fill="#0476f7"/>
<rect x="-32" y="32" width="32" height="32" fill="#049fed"/>
<rect x="0" y="32" width="32" height="32" fill="#049eed"/>
<rect x="32" y="32" width="32" height="32" fill="#049ded"/>
<rect x="608" y="32" width="32" height="32" fill="#0492f6"/>
<rect x="640" y="32" width="32" height="32" fill="#0490f6"/>
<rect x="672" y="32" width="32" height="32" fill="#048ff6"/>
<rect x="704" y="32" width="32" height="32" fill="#048ef6"/>
<rect x="736" y="32" width="32" height="32" fill="#048df6"/>
<rect x="768" y="32" width="32" height="32" fill="#048bf7"/>
<rect x="800" y="32" width="32" height="32" fill="#048af7"/>
<rect x="832" y="32" width="32" height="32" fill="#0489f7"/>
<rect x="864" y="32" width="32" height="32" fill="#0488f7"/>
<rect x="896" y="32" width="32" height="32" fill="#0487f7"/>
<rect x="928" y="32" width="32" height="32" fill="#0486f7"/>
<rect x="960" y="32" width="32" height="32" fill="#0484f8"/>
<rect x="992" y="32" width="32" height="32" fill="#0483f8"/>
<rect x="1024" y="32" width="32" height="32" fill="#0482f8"/>
<rect x="1056" y="32" width="32" height="32" fill="#0481f8"/>
<rect x="1088" y="32" width="32" height="32" fill="#0480f8"/>
<rect x="1120" y="32" width="32" height="32" fill="#047ff8"/>
<rect x="1152" y="32" width="32" height="32" fill="#047ef8"/>
<rect x="1184" y="32" width="32" height="32" fill="#047df8"/>
<rect x="1216" y="32" width="32" height="32" fill="#047cf8"/>
<rect x="1248" y="32" width="32" height="32" fill="#047bf8"/>
<rect x="1280" y="32" width="32" height="32" fill="#047af7"/>
<rect x="1312" y="32" width="32" height="32" fill="#0479f7"/>
<rect x="1344" y="32" width="32" height="32" fill="#0478f7"/>
<rect x="1376" y="32" width="32" height="32" fill="#0477f7"/>
<rect x="-32" y="64" width="32" height="32" fill="#04a0ed"/>
<rect x="0" y="64" width="32" height="32" fill="#049fed"/>
<rect x="32" y="64" width="32" height="32" fill="#049eed"/>
<rect x="608" y="64" width="32" height="32" fill="#0492f6"/>
<rect x="640" y="64" width="32" height="32" fill="#0491f6"/>
<rect x="672" y="64" width="32" height="32" fill="#0490f6"/>
<rect x="704" y="64" width="32" height="32" fill="#048ff6"/>
<rect x="736" y="64" width="32" height="32" fill="#048df6"/>
<rect x="768" y="64" width="32" height="32" fill="#048cf6"/>
<rect x="800" y="64" width="32" height="32" fill="#048bf6"/>
<rect x="832" y="64" width="32" height="32" fill="#048af7"/>
<rect x="864" y="64" width="32" height="32" fill="#0488f7"/>
<rect x="896" y="64" width="32" height="32" fill="#0487f7"/>
<rect x="928" y="64" width="32" height="32" fill="#0486f7"/>
<rect x="960" y="64" width="32" height="32" fill="#0485f7"/>
<rect x="992" y="64" width="32" height="32" fill="#0484f7"/>
<rect x="1024" y="64" width="32" height="32" fill="#0483f8"/>
<rect x="1056" y="64" width="32" height="32" fill="#0482f8"/>
<rect x="1088" y="64" width="32" height="32" fill="#0481f8"/>
<rect x="1120" y="64" width="32" height="32" fill="#0480f8"/>
<rect x="1152" y="64" width="32" height="32" fill="#047ff8"/>
<rect x="1184" y="64" width="32" height="32" fill="#047ef8"/>
<rect x="1216" y="64" width="32" height="32" fill="#047df8"/>
<rect x="1248" y="64" width="32" height="32" fill="#047bf8"/>
<rect x="1280" y="64" width="32" height="32" fill="#047af7"/>
<rect x="1312" y="64" width="32" height="32" fill="#0479f7"/>
<rect x="1344" y="64" width="32" height="32" fill="#0478f7"/>
<rect x="1376" y="64" width="32" height="32" fill="#0477f6"/>
<rect x="-32" y="96" width="32" height="32" fill="#04a1ed"/>
<rect x="0" y="96" width="32" height="32" fill="#04a0ed"/>
<rect x="32" y="96" width="32" height="32" fill="#049fed"/>
<rect x="608" y="96" width="32" height="32" fill="#0493f5"/>
<rect x="640" y="96" width="32" height="32" fill="#0492f5"/>
<rect x="672" y="96" width="32" height="32" fill="#0491f6"/>
<rect x="704" y="96" width="32" height="32" fill="#048ff6"/>
<rect x="736" y="96" width="32" height="32" fill="#048ef6"/>
<rect x="768" y="96" width="32" height="32" fill="#048df6"/>
<rect x="800" y="96" width="32" height="32" fill="#048cf6"/>
<rect x="832" y="96" width="32" height="32" fill="#048af6"/>
<rect x="864" y="96" width="32" height="32" fill="#0489f6"/>
<rect x="896" y="96" width="32" height="32" fill="#0488f7"/>
<rect x="928" y="96" width="32" height="32" fill="#0487f7"/>
<rect x="960" y="96" width="32" height="32" fill="#0486f7"/>
<rect x="992" y="96" width="32" height="32" fill="#0484f7"/>
<rect x="1024" y="96" width="32" height="32" fill="#0483f7"/>
<rect x="1056" y="96" width="32" height="32" fill="#0482f7"/>
<rect x="1088" y="96" width="32" height="32" fill="#0481f8"/>
<rect x="1120" y="96" width="32" height="32" fill="#0480f8"/>
<rect x="1152" y="96" width="32" height="32" fill="#047ff8"/>
<rect x="1184" y="96" width="32" height="32" fill="#047ef8"/>
<rect x="1216" y="96" width="32" height="32" fill="#047df8"/>
<rect x="1248" y="96" width="32" height="32" fill="#047cf7"/>
<rect x="1280" y="96" width="32" height="32" fill="#047bf7"/>
<rect x="1312" y="96" width="32" height="32" fill="#047af7"/>
<rect x="1344" y="96" width="32" height="32" fill="#0479f7"/>
<rect x="1376" y="96" width="32" height="32" fill="#0478f6"/>
<rect x="-32" y="128" width="32" height="32" fill="#04a2ed"/>
<rect x="0" y="128" width="32" height="32" fill="#04a1ed"/>
<rect x="32" y="128" width="32" height="32" fill="#04a0ed"/>
<rect x="608" y="128" width="32" height="32" fill="#0494f5"/>
<rect x="640" y="128" width="32" height="32" fill="#0493f5"/>
<rect x="672" y="128" width="32" height="32" fill="#0491f5"/>
<rect x="704" y="128" width="32" height="32" fill="#0490f5"/>
<rect x="736" y="128" width="32" height="32" fill="#048ff5"/>
<rect x="768" y="128" width="32" height="32" fill="#048df6"/>
<rect x="800" y="128" width="32" height="32" fill="#048cf6"/>
<rect x="832" y="128" width="32" height="32" fill="#048bf6"/>
<rect x="864" y="128" width="32" height="32" fill="#048af6"/>
<rect x="896" y="128" width="32" height="32" fill="#0488f6"/>
<rect x="928" y="128" width="32" height="32" fill="#0487f6"/>
<rect x="960" y="128" width="32" height="32" fill="#0486f7"/>
<rect x="992" y="128" width="32" height="32" fill="#0485f7"/>
<rect x="1024" y="128" width="32" height="32" fill="#0484f7"/>
<rect x="1056" y="128" width="32" height="32" fill="#0483f7"/>
<rect x="1088" y="128" width="32" height="32" fill="#0482f7"/>
<rect x="1120" y="128" width="32" height="32" fill="#0481f7"/>
<rect x="1152" y="128" width="32" height="32" fill="#0480f7"/>
<rect x="1184" y="128" width="32" height="32" fill="#047ff7"/>
<rect x="1216" y="128" width="32" height="32" fill="#047ef7"/>
<rect x="1248" y="128" width="32" height="32" fill="#047cf7"/>
<rect x="1280" y="128" width="32" height="32" fill="#047bf7"/>
<rect x="1312" y="128" width="32" height="32" fill="#047af7"/>
<rect x="1344" y="128" width="32" height="32" fill="#0479f6"/>
<rect x="1376" y="128" width="32" height="32" fill="#0478f6"/>
<rect x="-32" y="160" width="32" height="32" fill="#04a4ed"/>
<rect x="0" y="160" width="32" height="32" fill="#04a3ed"/>
<rect x="32" y="160" width="32" height="32" fill="#04a2ed"/>
<rect x="608" y="160" width="32" height="32" fill="#0495f5"/>
<rect x="640" y="160" width="32" height="32" fill="#0493f5"/>
<rect x="672" y="160" width="32" height="32" fill="#0492f5"/>
<rect x="704" y="160" width="32" height="32" fill="#0491f5"/>
<rect x="736" y="160" width="32" height="32" fill="#048ff5"/>
<rect x="768" y="160" width="32" height="32" fill="#048ef5"/>
<rect x="800" y="160" width="32" height="32" fill="#048df5"/>
<rect x="832" y="160" width="32" height="32" fill="#048bf5"/>
<rect x="864" y="160" width="32" height="32" fill="#048af6"/>
<rect x="896" y="160" width="32" height="32" fill="#0489f6"/>
<rect x="928" y="160" width="32" height="32" fill="#0488f6"/>
<rect x="960" y="160" width="32" height="32" fill="#0486f6"/>
<rect x="992" y="160" width="32" height="32" fill="#0485f6"/>
<rect x="1024" y="160" width="32" height="32" fill="#0484f6"/>
<rect x="1056" y="160" width="32" height="32" fill="#0483f7"/>
<rect x="1088" y="160" width="32" height="32" fill="#0482f7"/>
<rect x="1120" y="160" width="32" height="32" fill="#0481f7"/>
<rect x="1152" y="160" width="32" height="32" fill="#0480f7"/>
<rect x="1184" y="160" width="32" height="32" fill="#047ff7"/>
<rect x="1216" y="160" width="32" height="32" fill="#047ef7"/>
<rect x="1248" y="160" width="32" height="32" fill="#047df7"/>
<rect x="1280" y="160" width="32" height="32" fill="#047cf7"/>
<rect x="1312" y="160" width="32" height="32" fill="#047bf6"/>
<rect x="1344" y="160" width="32" height="32" fill="#047af6"/>
<rect x="1376" y="160" width="32" height="32" fill="#0479f6"/>
<rect x="-32" y="192" width="32" height="32" fill="#04a5ee"/>
<rect x="0" y="192" width="32" height="32" fill="#04a4ee"/>
<rect x="32" y="192" width="32" height="32" fill="#04a3ee"/>
<rect x="608" y="192" width="32" height="32" fill="#0495f4"/>
<rect x="640" y="192" width="32" height="32" fill="#0494f4"/>
<rect x="672" y="192" width="32" height="32" fill="#0493f5"/>
<rect x="704" y="192" width="32" height="32" fill="#0491f5"/>
<rect x="736" y="192" width="32" height="32" fill="#0490f5"/>
<rect x="768" y="192" width="32" height="32" fill="#048ff5"/>
<rect x="800" y="192" width="32" height="32" fill="#048df5"/>
<rect x="832" y="192" width="32" height="32" fill="#048cf5"/>
<rect x="864" y="192" width="32" height="32" fill="#048bf5"/>
<rect x="896" y="192" width="32" height="32" fill="#0489f5"/>
<rect x="928" y="192" width="32" height="32" fill="#0488f5"/>
<rect x="960" y="192" width="32" height="32" fill="#0487f5"/>
<rect x="992" y="192" width="32" height="32" fill="#0486f6"/>
<rect x="1024" y="192" width="32" height="32" fill="#0485f6"/>
<rect x="1056" y="192" width="32" height="32" fill="#0483f6"/>
<rect x="1088" y="192" width="32" height="32" fill="#0482f6"/>
<rect x="1120" y="192" width="32" height="32" fill="#0481f6"/>
<rect x="1152" y="192" width="32" height="32" fill="#0480f6"/>
<rect x="1184" y="192" width="32" height="32" fill="#047ff6"/>
<rect x="1216" y="192" width="32" height="32" fill="#047ef6"/>
<rect x="1248" y="192" width="32" height="32" fill="#047df6"/>
<rect x="1280" y="192" width="32" height="32" fill="#047cf6"/>
<rect x="1312" y="192" width="32" height="32" fill="#047bf6"/>
<rect x="1344" y="192" width="32" height="32" fill="#047af6"/>
<rect x="1376" y="192" width="32" height="32" fill="#0479f6"/>
<rect x="-32" y="224" width="32" height="32" fill="#04a6ee"/>
<rect x="0" y="224" width="32" height="32" fill="#04a5ee"/>
<rect x="32" y="224" width="32" height="32" fill="#04a4ee"/>
<rect x="608" y="224" width="32" height="32" fill="#0496f4"/>
<rect x="640" y="224" width="32" height="32" fill="#0495f4"/>
<rect x="672" y="224" width="32" height="32" fill="#0493f4"/>
<rect x="704" y="224" width="32" height="32" fill="#0492f4"/>
<rect x="736" y="224" width="32" height="32" fill="#0491f4"/>
<rect x="768" y="224" width="32" height="32" fill="#048ff4"/>
<rect x="800" y="224" width="32" height="32" fill="#048ef4"/>
<rect x="832" y="224" width="32" height="32" fill="#048df4"/>
<rect x="864" y="224" width="32" height="32" fill="#048bf5"/>
<rect x="896" y="224" width="32" height="32" fill="#048af5"/>
<rect x="928" y="224" width="32" height="32" fill="#0489f5"/>
<rect x="960" y="224" width="32" height="32" fill="#0487f5"/>
<rect x="992" y="224" width="32" height="32" fill="#0486f5"/>
<rect x="1024" y="224" width="32" height="32" fill="#0485f5"/>
<rect x="1056" y="224" width="32" height="32" fill="#0484f5"/>
<rect x="1088" y="224" width="32" height="32" fill="#0483f5"/>
<rect x="1120" y="224" width="32" height="32" fill="#0482f6"/>
<rect x="1152" y="224" width="32" height="32" fill="#0481f6"/>
<rect x="1184" y="224" width="32" height="32" fill="#0480f6"/>
<rect x="1216" y="224" width="32" height="32" fill="#047ff6"/>
<rect x="1248" y="224" width="32" height="32" fill="#047ef6"/>
<rect x="1280" y="224" width="32" height="32" fill="#047df6"/>
<rect x="1312" y="224" width="32" height="32" fill="#047cf6"/>
<rect x="1344" y="224" width="32" height="32" fill="#047bf5"/>
<rect x="1376" y="224" width="32" height="32" fill="#047af5"/>
<rect x="-32" y="256" width="32" height="32" fill="#04a8ef"/>
<rect x="0" y="256" width="32" height="32" fill="#04a6ef"/>
<rect x="32" y="256" width="32" height="32" fill="#04a5ef"/>
<rect x="608" y="256" width="32" height="32" fill="#0496f4"/>
<rect x="640" y="256" width="32" height="32" fill="#0495f4"/>
<rect x="672" y="256" width="32" height="32" fill="#0494f4"/>
<rect x="704" y="256" width="32" height="32" fill="#0492f4"/>
<rect x="736" y="256" width="32" height="32" fill="#0491f4"/>
<rect x="768" y="256" width="32" height="32" fill="#0490f4"/>
<rect x="800" y="256" width="32" height="32" fill="#048ef4"/>
<rect x="832" y="256" width="32" height="32" fill="#048df4"/>
<rect x="864" y="256" width="32" height="32" fill="#048cf4"/>
<rect x="896" y="256" width="32" height="32" fill="#048af4"/>
<rect x="928" y="256" width="32" height="32" fill="#0489f4"/>
<rect x="960" y="256" width="32" height="32" fill="#0488f4"/>
<rect x="992" y="256" width="32" height="32" fill="#0486f4"/>
<rect x="1024" y="256" width="32" height="32" fill="#0485f4"/>
<rect x="1056" y="256" width="32" height="32" fill="#0484f5"/>
<rect x="1088" y="256" width="32" height="32" fill="#0483f5"/>
<rect x="1120" y="256" width="32" height="32" fill="#0482f5"/>
<rect x="1152" y="256" width="32" height="32" fill="#0481f5"/>
<rect x="1184" y="256" width="32" height="32" fill="#0480f5"/>
<rect x="1216" y="256" width="32" height="32" fill="#047ff5"/>
<rect x="1248" y="256" width="32" height="32" fill="#047ef5"/>
<rect x="1280" y="256" width="32" height="32" fill="#047df5"/>
<rect x="1312" y="256" width="32" height="32" fill="#047cf5"/>
<rect x="1344" y="256" width="32" height="32" fill="#047bf5"/>
<rect x="1376" y="256" width="32" height="32" fill="#047af5"/>
<rect x="-32" y="288" width="32" height="32" fill="#04a9ef"/>
<rect x="0" y="288" width="32" height="32" fill="#04a8ef"/>
<rect x="32" y="288" width="32" height="32" fill="#04a7ef"/>
<rect x="608" y="288" width="32" height="32" fill="#0497f3"/>
<rect x="640" y="288" width="32" height="32" fill="#0496f3"/>
<rect x="672" y="288" width="32" height="32" fill="#0494f3"/>
<rect x="704" y="288" width="32" height="32" fill="#0493f3"/>
<rect x="736" y="288" width="32" height="32" fill="#0492f3"/>
<rect x="768" y="288" width="32" height="32" fill="#0490f3"/>
<rect x="800" y="288" width="32" height="32" fill="#048ff3"/>
<rect x="832" y="288" width="32" height="32" fill="#048df3"/>
<rect x="864" y="288" width="32" height="32" fill="#048cf3"/>
<rect x="896" y="288" width="32" height="32" fill="#048bf3"/>
<rect x="928" y="288" width="32" height="32" fill="#0489f3"/>
<rect x="960" y="288" width="32" height="32" fill="#0488f3"/>
<rect x="992" y="288" width="32" height="32" fill="#0487f4"/>
<rect x="1024" y="288" width="32" height="32" fill="#0485f4"/>
<rect x="1056" y="288" width="32" height="32" fill="#0484f4"/>
<rect x="1088" y="288" width="32" height="32" fill="#0483f4"/>
<rect x="1120" y="288" width="32" height="32" fill="#0482f4"/>
<rect x="1152" y="288" width="32" height="32" fill="#0481f4"/>
<rect x="1184" y="288" width="32" height="32" fill="#0480f4"/>
<rect x="1216" y="288" width="32" height="32" fill="#047ff4"/>
<rect x="1248" y="288" width="32" height="32" fill="#047ef5"/>
<rect x="1280" y="288" width="32" height="32" fill="#047df5"/>
<rect x="1312" y="288" width="32" height="32" fill="#047cf5"/>
<rect x="1344" y="288" width="32" height="32" fill="#047bf4"/>
<rect x="1376" y="288" width="32" height="32" fill="#047bf4"/>
<rect x="-32" y="320" width="32" height="32" fill="#04aaef"/>
<rect x="0" y="320" width="32" height="32" fill="#04a9f0"/>
<rect x="32" y="320" width="32" height="32" fill="#04a8f0"/>
<rect x="608" y="320" width="32" height="32" fill="#0497f3"/>
<rect x="640" y="320" width="32" height="32" fill="#0496f3"/>
<rect x="672" y="320" width="32" height="32" fill="#0495f3"/>
<rect x="704" y="320" width="32" height="32" fill="#0493f3"/>
<rect x="736" y="320" width="32" height="32" fill="#0492f3"/>
<rect x="768" y="320" width="32" height="32" fill="#0491f3"/>
<rect x="800" y="320" width="32" height="32" fill="#048ff3"/>
<rect x="832" y="320" width="32" height="32" fill="#048ef3"/>
<rect x="864" y="320" width="32" height="32" fill="#048cf3"/>
<rect x="896" y="320" width="32" height="32" fill="#048bf3"/>
<rect x="928" y="320" width="32" height="32" fill="#048af3"/>
<rect x="960" y="320" width="32" height="32" fill="#0488f3"/>
<rect x="992" y="320" width="32" height="32" fill="#0487f3"/>
<rect x="1024" y="320" width="32" height="32" fill="#0486f3"/>
<rect x="1056" y="320" width="32" height="32" fill="#0484f3"/>
<rect x="1088" y="320" width="32" height="32" fill="#0483f3"/>
<rect x="1120" y="320" width="32" height="32" fill="#0482f3"/>
<rect x="1152" y="320" width="32" height="32" fill="#0481f3"/>
<rect x="1184" y="320" width="32" height="32" fill="#0480f3"/>
<rect x="1216" y="320" width="32" height="32" fill="#047ff4"/>
<rect x="1248" y="320" width="32" height="32" fill="#047ef4"/>
<rect x="1280" y="320" width="32" height="32" fill="#047df4"/>
<rect x="1312" y="320" width="32" height="32" fill="#047df4"/>
<rect x="1344" y="320" width="32" height="32" fill="#047cf4"/>
<rect x="1376" y="320" width="32" height="32" fill="#047bf4"/>
<rect x="-32" y="352" width="32" height="32" fill="#04aaf0"/>
<rect x="0" y="352" width="32" height="32" fill="#04a9f0"/>
<rect x="32" y="352" width="32" height="32" fill="#04a8f0"/>
<rect x="608" y="352" width="32" height="32" fill="#0498f2"/>
<rect x="640" y="352" width="32" height="32" fill="#0497f2"/>
<rect x="672" y="352" width="32" height="32" fill="#0495f2"/>
<rect x="704" y="352" width="32" height="32" fill="#0494f2"/>
<rect x="736" y="352" width="32" height="32" fill="#0492f2"/>
<rect x="768" y="352" width="32" height="32" fill="#0491f2"/>
<rect x="800" y="352" width="32" height="32" fill="#0490f2"/>
<rect x="832" y="352" width="32" height="32" fill="#048ef2"/>
<rect x="864" y="352" width="32" height="32" fill="#048df2"/>
<rect x="896" y="352" width="32" height="32" fill="#048bf2"/>
<rect x="928" y="352" width="32" height="32" fill="#048af2"/>
<rect x="960" y="352" width="32" height="32" fill="#0488f2"/>
<rect x="992" y="352" width="32" height="32" fill="#0487f2"/>
<rect x="1024" y="352" width="32" height="32" fill="#0486f2"/>
<rect x="1056" y="352" width="32" height="32" fill="#0485f2"/>
<rect x="1088" y="352" width="32" height="32" fill="#0483f2"/>
<rect x="1120" y="352" width="32" height="32" fill="#0482f2"/>
<rect x="1152" y="352" width="32" height="32" fill="#0481f2"/>
<rect x="1184" y="352" width="32" height="32" fill="#0480f2"/>
<rect x="1216" y="352" width="32" height="32" fill="#047ff3"/>
<rect x="1248" y="352" width="32" height="32" fill="#047ef3"/>
<rect x="1280" y="352" width="32" height="32" fill="#047ef3"/>
<rect x="1312" y="352" width="32" height="32" fill="#047df3"/>
<rect x="1344" y="352" width="32" height="32" fill="#047cf3"/>
<rect x="1376" y="352" width="32" height="32" fill="#047bf3"/>
<rect x="-32" y="384" width="32" height="32" fill="#04abf0"/>
<rect x="0" y="384" width="32" height="32" fill="#04aaf0"/>
<rect x="32" y="384" width="32" height="32" fill="#04a9f0"/>
<rect x="608" y="384" width="32" height="32" fill="#0498f2"/>
<rect x="640" y="384" width="32" height="32" fill="#0497f2"/>
<rect x="672" y="384" width="32" height="32" fill="#0496f2"/>
<rect x="704" y="384" width="32" height="32" fill="#0494f2"/>
<rect x="736" y="384" width="32" height="32" fill="#0493f2"/>
<rect x="768" y="384" width="32" height="32" fill="#0491f2"/>
<rect x="800" y="384" width="32" height="32" fill="#0490f1"/>
<rect x="832" y="384" width="32" height="32" fill="#048ef1"/>
<rect x="864" y="384" width="32" height="32" fill="#048df1"/>
<rect x="896" y="384" width="32" height="32" fill="#048bf1"/>
<rect x="928" y="384" width="32" height="32" fill="#048af1"/>
<rect x="960" y="384" width="32" height="32" fill="#0489f1"/>
<rect x="992" y="384" width="32" height="32" fill="#0487f1"/>
<rect x="1024" y="384" width="32" height="32" fill="#0486f1"/>
<rect x="1056" y="384" width="32" height="32" fill="#0485f1"/>
<rect x="1088" y="384" width="32" height="32" fill="#0483f1"/>
<rect x="1120" y="384" width="32" height="32" fill="#0482f1"/>
<rect x="1152" y="384" width="32" height="32" fill="#0481f1"/>
<rect x="1184" y="384" width="32" height="32" fill="#0480f1"/>
<rect x="1216" y="384" width="32" height="32" fill="#047ff2"/>
<rect x="1248" y="384" width="32" height="32" fill="#047ef2"/>
<rect x="1280" y="384" width="32" height="32" fill="#047ef2"/>
<rect x="1312" y="384" width="32" height="32" fill="#047df2"/>
<rect x="1344" y="384" width="32" height="32" fill="#047cf2"/>
<rect x="1376" y="384" width="32" height="32" fill="#047cf3"/>
<rect x="-32" y="416" width="32" height="32" fill="#04acf0"/>
<rect x="0" y="416" width="32" height="32" fill="#04abf0"/>
<rect x="32" y="416" width="32" height="32" fill="#04aaf0"/>
<rect x="608" y="416" width="32" height="32" fill="#0499f1"/>
<rect x="640" y="416" width="32" height="32" fill="#0497f1"/>
<rect x="672" y="416" width="32" height="32" fill="#0496f1"/>
<rect x="704" y="416" width="32" height="32" fill="#0495f1"/>
<rect x="736" y="416" width="32" height="32" fill="#0493f1"/>
<rect x="768" y="416" width="32" height="32" fill="#0492f1"/>
<rect x="800" y="416" width="32" height="32" fill="#0490f1"/>
<rect x="832" y="416" width="32" height="32" fill="#048ff1"/>
<rect x="864" y="416" width="32" height="32" fill="#048df0"/>
<rect x="896" y="416" width="32" height="32" fill="#048cf0"/>
<rect x="928" y="416" width="32" height="32" fill="#048af0"/>
<rect x="960" y="416" width="32" height="32" fill="#0489f0"/>
<rect x="992" y="416" width="32" height="32" fill="#0487f0"/>
<rect x="1024" y="416" width="32" height="32" fill="#0486f0"/>
<rect x="1056" y="416" width="32" height="32" fill="#0485f0"/>
<rect x="1088" y="416" width="32" height="32" fill="#0483f0"/>
<rect x="1120" y="416" width="32" height="32" fill="#0482f0"/>
<rect x="1152" y="416" width="32" height="32" fill="#0481f0"/>
<rect x="1184" y="416" width="32" height="32" fill="#0480f0"/>
<rect x="1216" y="416" width="32" height="32" fill="#047ff0"/>
<rect x="1248" y="416" width="32" height="32" fill="#047ef1"/>
<rect x="1280" y="416" width="32" height="32" fill="#047ef1"/>
<rect x="1312" y="416" width="32" height="32" fill="#047df1"/>
<rect x="1344" y="416" width="32" height="32" fill="#047df2"/>
<rect x="1376" y="416" width="32" height="32" fill="#047cf2"/>
<rect x="-32" y="448" width="32" height="32" fill="#04acf0"/>
<rect x="0" y="448" width="32" height="32" fill="#04abf0"/>
<rect x="32" y="448" width="32" height="32" fill="#04aaf0"/>
<rect x="608" y="448" width="32" height="32" fill="#0499f1"/>
<rect x="640" y="448" width="32" height="32" fill="#0498f1"/>
<rect x="672" y="448" width="32" height="32" fill="#0496f1"/>
<rect x="704" y="448" width="32" height="32" fill="#0495f0"/>
<rect x="736" y="448" width="32" height="32" fill="#0493f0"/>
<rect x="768" y="448" width="32" height="32" fill="#0492f0"/>
<rect x="800" y="448" width="32" height="32" fill="#0490f0"/>
<rect x="832" y="448" width="32" height="32" fill="#048ff0"/>
<rect x="864" y="448" width="32" height="32" fill="#048df0"/>
<rect x="896" y="448" width="32" height="32" fill="#048cef"/>
<rect x="928" y="448" width="32" height="32" fill="#048aef"/>
<rect x="960" y="448" width="32" height="32" fill="#0489ef"/>
<rect x="992" y="448" width="32" height="32" fill="#0487ef"/>
<rect x="1024" y="448" width="32" height="32" fill="#0486ef"/>
<rect x="1056" y="448" width="32" height="32" fill="#0485ef"/>
<rect x="1088" y="448" width="32" height="32" fill="#0483ef"/>
<rect x="1120" y="448" width="32" height="32" fill="#0482ef"/>
<rect x="1152" y="448" width="32" height="32" fill="#0481ef"/>
<rect x="1184" y="448" width="32" height="32" fill="#0480ef"/>
<rect x="1216" y="448" width="32" height="32" fill="#047fef"/>
<rect x="1248" y="448" width="32" height="32" fill="#047ff0"/>
<rect x="1280" y="448" width="32" height="32" fill="#047ef0"/>
<rect x="1312" y="448" width="32" height="32" fill="#047df1"/>
<rect x="1344" y="448" width="32" height="32" fill="#047df1"/>
<rect x="1376" y="448" width="32" height="32" fill="#047cf1"/>
<rect x="-32" y="480" width="32" height="32" fill="#04adf0"/>
<rect x="0" y="480" width="32" height="32" fill="#04acf0"/>
<rect x="32" y="480" width="32" height="32" fill="#04abf0"/>
<rect x="608" y="480" width="32" height="32" fill="#0499f0"/>
<rect x="640" y="480" width="32" height="32" fill="#0498f0"/>
<rect x="672" y="480" width="32" height="32" fill="#0496f0"/>
<rect x="704" y="480" width="32" height="32" fill="#0495f0"/>
<rect x="736" y="480" width="32" height="32" fill="#0494f0"/>
<rect x="768" y="480" width="32" height="32" fill="#0492ef"/>
<rect x="800" y="480" width="32" height="32" fill="#0491ef"/>
<rect x="832" y="480" width="32" height="32" fill="#048fef"/>
<rect x="864" y="480" width="32" height="32" fill="#048eef"/>
<rect x="896" y="480" width="32" height="32" fill="#048cef"/>
<rect x="928" y="480" width="32" height="32" fill="#048bee"/>
<rect x="960" y="480" width="32" height="32" fill="#0489ee"/>
<rect x="992" y="480" width="32" height="32" fill="#0488ee"/>
<rect x="1024" y="480" width="32" height="32" fill="#0486ee"/>
<rect x="1056" y="480" width="32" height="32" fill="#0485ee"/>
<rect x="1088" y="480" width="32" height="32" fill="#0484ee"/>
<rect x="1120" y="480" width="32" height="32" fill="#0482ee"/>
<rect x="1152" y="480" width="32" height="32" fill="#0481ee"/>
<rect x="1184" y="480" width="32" height="32" fill="#0480ee"/>
<rect x="1216" y="480" width="32" height="32" fill="#047fee"/>
<rect x="1248" y="480" width="32" height="32" fill="#047fef"/>
<rect x="1280" y="480" width="32" height="32" fill="#047eef"/>
<rect x="1312" y="480" width="32" height="32" fill="#047ef0"/>
<rect x="1344" y="480" width="32" height="32" fill="#047df0"/>
<rect x="1376" y="480" width="32" height="32" fill="#047df1"/>
<rect x="-32" y="512" width="32" height="32" fill="#04adf0"/>
<rect x="0" y="512" width="32" height="32" fill="#04acf0"/>
<rect x="32" y="512" width="32" height="32" fill="#04abf0"/>
<rect x="608" y="512" width="32" height="32" fill="#0499ef"/>
<rect x="640" y="512" width="32" height="32" fill="#0498ef"/>
<rect x="672" y="512" width="32" height="32" fill="#0497ef"/>
<rect x="704" y="512" width="32" height="32" fill="#0495ef"/>
<rect x="736" y="512" width="32" height="32" fill="#0494ef"/>
<rect x="768" y="512" width="32" height="32" fill="#0492ef"/>
<rect x="800" y="512" width="32" height="32" fill="#0491ee"/>
<rect x="832" y="512" width="32" height="32" fill="#048fee"/>
<rect x="864" y="512" width="32" height="32" fill="#048eee"/>
<rect x="896" y="512" width="32" height="32" fill="#048cee"/>
<rect x="928" y="512" width="32" height="32" fill="#048bee"/>
<rect x="960" y="512" width="32" height="32" fill="#0489ed"/>
<rect x="992" y="512" width="32" height="32" fill="#0488ed"/>
<rect x="1024" y="512" width="32" height="32" fill="#0486ed"/>
<rect x="1056" y="512" width="32" height="32" fill="#0485ed"/>
<rect x="1088" y="512" width="32" height="32" fill="#0484ed"/>
<rect x="1120" y="512" width="32" height="32" fill="#0482ed"/>
<rect x="1152" y="512" width="32" height="32" fill="#0481ed"/>
<rect x="1184" y="512" width="32" height="32" fill="#0480ed"/>
<rect x="1216" y="512" width="32" height="32" fill="#0480ee"/>
<rect x="1248" y="512" width="32" height="32" fill="#047fee"/>
<rect x="1280" y="512" width="32" height="32" fill="#047eee"/>
<rect x="1312" y="512" width="32" height="32" fill="#047eef"/>
<rect x="1344" y="512" width="32" height="32" fill="#047ef0"/>
<rect x="1376" y="512" width="32" height="32" fill="#047df0"/>
<rect x="-32" y="544" width="32" height="32" fill="#04adf0"/>
<rect x="0" y="544" width="32" height="32" fill="#04acf0"/>
<rect x="32" y="544" width="32" height="32" fill="#04abf0"/>
<rect x="608" y="544" width="32" height="32" fill="#049aef"/>
<rect x="640" y="544" width="32" height="32" fill="#0498ef"/>
<rect x="672" y="544" width="32" height="32" fill="#0497ee"/>
<rect x="704" y="544" width="32" height="32" fill="#0496ee"/>
<rect x="736" y="544" width="32" height="32" fill="#0494ee"/>
<rect x="768" y="544" width="32" height="32" fill="#0493ee"/>
<rect x="800" y="544" width="32" height="32" fill="#0491ee"/>
<rect x="832" y="544" width="32" height="32" fill="#0490ed"/>
<rect x="864" y="544" width="32" height="32" fill="#048eed"/>
<rect x="896" y="544" width="32" height="32" fill="#048ced"/>
<rect x="928" y="544" width="32" height="32" fill="#048bed"/>
<rect x="960" y="544" width="32" height="32" fill="#0489ed"/>
<rect x="992" y="544" width="32" height="32" fill="#0488ec"/>
<rect x="1024" y="544" width="32" height="32" fill="#0487ec"/>
<rect x="1056" y="544" width="32" height="32" fill="#0485ec"/>
<rect x="1088" y="544" width="32" height="32" fill="#0484ec"/>
<rect x="1120" y="544" width="32" height="32" fill="#0483ec"/>
<rect x="1152" y="544" width="32" height="32" fill="#0482ec"/>
<rect x="1184" y="544" width="32" height="32" fill="#0481ec"/>
<rect x="1216" y="544" width="32" height="32" fill="#0480ed"/>
<rect x="1248" y="544" width="32" height="32" fill="#047fed"/>
<rect x="1280" y="544" width="32" height="32" fill="#047fee"/>
<rect x="1312" y="544" width="32" height="32" fill="#047eee"/>
<rect x="1344" y="544" width="32" height="32" fill="#047eef"/>
<rect x="1376" y="544" width="32" height="32" fill="#047ef0"/>
<rect x="-32" y="576" width="32" height="32" fill="#04aef0"/>
<rect x="0" y="576" width="32" height="32" fill="#04adf0"/>
<rect x="32" y="576" width="32" height="32" fill="#04acf0"/>
<rect x="608" y="576" width="32" height="32" fill="#049aee"/>
<rect x="640" y="576" width="32" height="32" fill="#0499ee"/>
<rect x="672" y="576" width="32" height="32" fill="#0497ee"/>
<rect x="704" y="576" width="32" height="32" fill="#0496ee"/>
<rect x="736" y="576" width="32" height="32" fill="#0494ed"/>
<rect x="768" y="576" width="32" height="32" fill="#0493ed"/>
<rect x="800" y="576" width="32" height="32" fill="#0491ed"/>
<rect x="832" y="576" width="32" height="32" fill="#0490ed"/>
<rect x="864" y="576" width="32" height="32" fill="#048eec"/>
<rect x="896" y="576" width="32" height="32" fill="#048dec"/>
<rect x="928" y="576" width="32" height="32" fill="#048bec"/>
<rect x="960" y="576" width="32" height="32" fill="#048aec"/>
<rect x="992" y="576" width="32" height="32" fill="#0488ec"/>
<rect x="1024" y="576" width="32" height="32" fill="#0487eb"/>
<rect x="1056" y="576" width="32" height="32" fill="#0485eb"/>
<rect x="1088" y="576" width="32" height="32" fill="#0484eb"/>
<rect x="1120" y="576" width="32" height="32" fill="#0483eb"/>
<rect x="1152" y="576" width="32" height="32" fill="#0482eb"/>
<rect x="1184" y="576" width="32" height="32" fill="#0481ec"/>
<rect x="1216" y="576" width="32" height="32" fill="#0480ec"/>
<rect x="1248" y="576" width="32" height="32" fill="#0480ed"/>
<rect x="1280" y="576" width="32" height="32" fill="#047fed"/>
<rect x="1312" y="576" width="32" height="32" fill="#047fee"/>
<rect x="1344" y="576" width="32" height="32" fill="#047fef"/>
<rect x="1376" y="576" width="32" height="32" fill="#047ef0"/>
<rect x="-32" y="608" width="32" height="32" fill="#04aef0"/>
<rect x="0" y="608" width="32" height="32" fill="#04adf0"/>
<rect x="32" y="608" width="32" height="32" fill="#04acf0"/>
<rect x="608" y="608" width="32" height="32" fill="#049aed"/>
<rect x="640" y="608" width="32" height="32" fill="#0499ed"/>
<rect x="672" y="608" width="32" height="32" fill="#0497ed"/>
<rect x="704" y="608" width="32" height="32" fill="#0496ed"/>
<rect x="736" y="608" width="32" height="32" fill="#0494ed"/>
<rect x="768" y="608" width="32" height="32" fill="#0493ec"/>
<rect x="800" y="608" width="32" height="32" fill="#0492ec"/>
<rect x="832" y="608" width="32" height="32" fill="#0490ec"/>
<rect x="864" y="608" width="32" height="32" fill="#048fec"/>
<rect x="896" y="608" width="32" height="32" fill="#048deb"/>
<rect x="928" y="608" width="32" height="32" fill="#048beb"/>
<rect x="960" y="608" width="32" height="32" fill="#048aeb"/>
<rect x="992" y="608" width="32" height="32" fill="#0489eb"/>
<rect x="1024" y="608" width="32" height="32" fill="#0487eb"/>
<rect x="1056" y="608" width="32" height="32" fill="#0486eb"/>
<rect x="1088" y="608" width="32" height="32" fill="#0484eb"/>
<rect x="1120" y="608" width="32" height="32" fill="#0483eb"/>
<rect x="1152" y="608" width="32" height="32" fill="#0482eb"/>
<rect x="1184" y="608" width="32" height="32" fill="#0481eb"/>
<rect x="1216" y="608" width="32" height="32" fill="#0481ec"/>
<rect x="1248" y="608" width="32" height="32" fill="#0480ec"/>
<rect x="1280" y="608" width="32" height="32" fill="#0480ed"/>
<rect x="1312" y="608" width="32" height="32" fill="#047fee"/>
<rect x="1344" y="608" width="32" height="32" fill="#047fef"/>
<rect x="1376" y="608" width="32" height="32" fill="#047fef"/>
<rect x="-32" y="640" width="32" height="32" fill="#04aff0"/>
<rect x="0" y="640" width="32" height="32" fill="#04aef0"/>
<rect x="32" y="640" width="32" height="32" fill="#04adf0"/>
<rect x="64" y="640" width="32" height="32" fill="#04acf0"/>
<rect x="96" y="640" width="32" height="32" fill="#04abf0"/>
<rect x="128" y="640" width="32" height="32" fill="#04aaf0"/>
<rect x="160" y="640" width="32" height="32" fill="#04a9f0"/>
<rect x="192" y="640" width="32" height="32" fill="#04a7f0"/>
<rect x="224" y="640" width="32" height="32" fill="#04a6f0"/>
<rect x="256" y="640" width="32" height="32" fill="#04a5f0"/>
<rect x="288" y="640" width="32" height="32" fill="#04a5f0"/>
<rect x="320" y="640" width="32" height="32" fill="#04a4ef"/>
<rect x="352" y="640" width="32" height="32" fill="#04a3ef"/>
<rect x="384" y="640" width="32" height="32" fill="#04a2ee"/>
<rect x="416" y="640" width="32" height="32" fill="#04a1ee"/>
<rect x="448" y="640" width="32" height="32" fill="#04a0ed"/>
<rect x="480" y="640" width="32" height="32" fill="#049fed"/>
<rect x="512" y="640" width="32" height="32" fill="#049eed"/>
<rect x="544" y="640" width="32" height="32" fill="#049ded"/>
<rect x="576" y="640" width="32" height="32" fill="#049ced"/>
<rect x="608" y="640" width="32" height="32" fill="#049aed"/>
<rect x="640" y="640" width="32" height="32" fill="#0499ec"/>
<rect x="672" y="640" width="32" height="32" fill="#0498ec"/>
<rect x="704" y="640" width="32" height="32" fill="#0496ec"/>
<rect x="736" y="640" width="32" height="32" fill="#0495ec"/>
<rect x="768" y="640" width="32" height="32" fill="#0493ec"/>
<rect x="800" y="640" width="32" height="32" fill="#0492eb"/>
<rect x="832" y="640" width="32" height="32" fill="#0490eb"/>
<rect x="864" y="640" width="32" height="32" fill="#048feb"/>
<rect x="896" y="640" width="32" height="32" fill="#048deb"/>
<rect x="928" y="640" width="32" height="32" fill="#048ceb"/>
<rect x="960" y="640" width="32" height="32" fill="#048aea"/>
<rect x="992" y="640" width="32" height="32" fill="#0489ea"/>
<rect x="1024" y="640" width="32" height="32" fill="#0487ea"/>
<rect x="1056" y="640" width="32" height="32" fill="#0486ea"/>
<rect x="1088" y="640" width="32" height="32" fill="#0485ea"/>
<rect x="1120" y="640" width="32" height="32" fill="#0484ea"/>
<rect x="1152" y="640" width="32" height="32" fill="#0483ea"/>
<rect x="1184" y="640" width="32" height="32" fill="#0482eb"/>
<rect x="1216" y="640" width="32" height="32" fill="#0481eb"/>
<rect x="1248" y="640" width="32" height="32" fill="#0481ec"/>
<rect x="1280" y="640" width="32" height="32" fill="#0480ed"/>
<rect x="1312" y="640" width="32" height="32" fill="#0480ee"/>
<rect x="1344" y="640" width="32" height="32" fill="#0480ee"/>
<rect x="1376" y="640" width="32" height="32" fill="#0480ef"/>
<rect x="-32" y="672" width="32" height="32" fill="#04aff0"/>
<rect x="0" y="672" width="32" height="32" fill="#04aef0"/>
<rect x="32" y="672" width="32" height="32" fill="#04adf0"/>
<rect x="64" y="672" width="32" height="32" fill="#04acf0"/>
<rect x="96" y="672" width="32" height="32" fill="#04abf0"/>
<rect x="128" y="672" width="32" height="32" fill="#04aaf0"/>
<rect x="160" y="672" width="32" height="32" fill="#04a9f0"/>
<rect x="192" y="672" width="32" height="32" fill="#04a8f0"/>
<rect x="224" y="672" width="32" height="32" fill="#04a7f0"/>
<rect x="256" y="672" width="32" height="32" fill="#04a6f0"/>
<rect x="288" y="672" width="32" height="32" fill="#04a5f0"/>
<rect x="320" y="672" width="32" height="32" fill="#04a4ef"/>
<rect x="352" y="672" width="32" height="32" fill="#04a3ee"/>
<rect x="384" y="672" width="32" height="32" fill="#04a2ee"/>
<rect x="416" y="672" width="32" height="32" fill="#04a1ed"/>
<rect x="448" y="672" width="32" height="32" fill="#04a0ed"/>
<rect x="480" y="672" width="32" height="32" fill="#049fed"/>
<rect x="512" y="672" width="32" height="32" fill="#049eec"/>
<rect x="544" y="672" width="32" height="32" fill="#049dec"/>
<rect x="576" y="672" width="32" height="32" fill="#049cec"/>
<rect x="608" y="672" width="32" height="32" fill="#049aec"/>
<rect x="640" y="672" width="32" height="32" fill="#0499ec"/>
<rect x="672" y="672" width="32" height="32" fill="#0498ec"/>
<rect x="704" y="672" width="32" height="32" fill="#0496eb"/>
<rect x="736" y="672" width="32" height="32" fill="#0495eb"/>
<rect x="768" y="672" width="32" height="32" fill="#0494eb"/>
<rect x="800" y="672" width="32" height="32" fill="#0492eb"/>
<rect x="832" y="672" width="32" height="32" fill="#0491eb"/>
<rect x="864" y="672" width="32" height="32" fill="#048fea"/>
<rect x="896" y="672" width="32" height="32" fill="#048eea"/>
<rect x="928" y="672" width="32" height="32" fill="#048cea"/>
<rect x="960" y="672" width="32" height="32" fill="#048bea"/>
<rect x="992" y="672" width="32" height="32" fill="#0489ea"/>
<rect x="1024" y="672" width="32" height="32" fill="#0488ea"/>
<rect x="1056" y="672" width="32" height="32" fill="#0487ea"/>
<rect x="1088" y="672" width="32" height="32" fill="#0485ea"/>
<rect x="1120" y="672" width="32" height="32" fill="#0484ea"/>
<rect x="1152" y="672" width="32" height="32" fill="#0483ea"/>
<rect x="1184" y="672" width="32" height="32" fill="#0483eb"/>
<rect x="1216" y="672" width="32" height="32" fill="#0482eb"/>
<rect x="1248" y="672" width="32" height="32" fill="#0482ec"/>
<rect x="1280" y="672" width="32" height="32" fill="#0481ed"/>
<rect x="1312" y="672" width="32" height="32" fill="#0481ed"/>
<rect x="1344" y="672" width="32" height="32" fill="#0481ee"/>
<rect x="1376" y="672" width="32" height="32" fill="#0480ef"/>
<rect x="-32" y="704" width="32" height="32" fill="#04b0f0"/>
<rect x="0" y="704" width="32" height="32" fill="#04aff0"/>
<rect x="32" y="704" width="32" height="32" fill="#04aef0"/>
<rect x="64" y="704" width="32" height="32" fill="#04adf0"/>
<rect x="96" y="704" width="32" height="32" fill="#04abf0"/>
<rect x="128" y="704" width="32" height="32" fill="#04aaf0"/>
<rect x="160" y="704" width="32" height="32" fill="#04a9f0"/>
<rect x="192" y="704" width="32" height="32" fill="#04a8f0"/>
<rect x="224" y="704" width="32" height="32" fill="#04a7f0"/>
<rect x="256" y="704" width="32" height="32" fill="#04a6f0"/>
<rect x="288" y="704" width="32" height="32" fill="#04a5ef"/>
<rect x="320" y="704" width="32" height="32" fill="#04a4ef"/>
<rect x="352" y="704" width="32" height="32" fill="#04a4ee"/>
<rect x="384" y="704" width="32" height="32" fill="#04a3ed"/>
<rect x="416" y="704" width="32" height="32" fill="#04a2ed"/>
<rect x="448" y="704" width="32" height="32" fill="#04a1ec"/>
<rect x="480" y="704" width="32" height="32" fill="#04a0ec"/>
<rect x="512" y="704" width="32" height="32" fill="#049eec"/>
<rect x="544" y="704" width="32" height="32" fill="#049dec"/>
<rect x="576" y="704" width="32" height="32" fill="#049ceb"/>
<rect x="608" y="704" width="32" height="32" fill="#049beb"/>
<rect x="640" y="704" width="32" height="32" fill="#0499eb"/>
<rect x="672" y="704" width="32" height="32" fill="#0498eb"/>
<rect x="704" y="704" width="32" height="32" fill="#0497eb"/>
<rect x="736" y="704" width="32" height="32" fill="#0495ea"/>
<rect x="768" y="704" width="32" height="32" fill="#0494ea"/>
<rect x="800" y="704" width="32" height="32" fill="#0492ea"/>
<rect x="832" y="704" width="32" height="32" fill="#0491ea"/>
<rect x="864" y="704" width="32" height="32" fill="#048fea"/>
<rect x="896" y="704" width="32" height="32" fill="#048eea"/>
<rect x="928" y="704" width="32" height="32" fill="#048de9"/>
<rect x="960" y="704" width="32" height="32" fill="#048be9"/>
<rect x="992" y="704" width="32" height="32" fill="#048ae9"/>
<rect x="1024" y="704" width="32" height="32" fill="#0488e9"/>
<rect x="1056" y="704" width="32" height="32" fill="#0487e9"/>
<rect x="1088" y="704" width="32" height="32" fill="#0486e9"/>
<rect x="1120" y="704" width="32" height="32" fill="#0485ea"/>
<rect x="1152" y="704" width="32" height="32" fill="#0484ea"/>
<rect x="1184" y="704" width="32" height="32" fill="#0483ea"/>
<rect x="1216" y="704" width="32" height="32" fill="#0483eb"/>
<rect x="1248" y="704" width="32" height="32" fill="#0483ec"/>
<rect x="1280" y="704" width="32" height="32" fill="#0482ed"/>
<rect x="1312" y="704" width="32" height="32" fill="#0482ed"/>
<rect x="1344" y="704" width="32" height="32" fill="#0482ee"/>
<rect x="1376" y="704" width="32" height="32" fill="#0481ef"/>
<rect x="-32" y="736" width="32" height="32" fill="#04b0f0"/>
<rect x="0" y="736" width="32" height="32" fill="#04aff0"/>
<rect x="32" y="736" width="32" height="32" fill="#04aef0"/>
<rect x="64" y="736" width="32" height="32" fill="#04adf0"/>
<rect x="96" y="736" width="32" height="32" fill="#04acf0"/>
<rect x="128" y="736" width="32" height="32" fill="#04abf0"/>
<rect x="160" y="736" width="32" height="32" fill="#04aaf0"/>
<rect x="192" y="736" width="32" height="32" fill="#04a9f0"/>
<rect x="224" y="736" width="32" height="32" fill="#04a8f0"/>
<rect x="256" y="736" width="32" height="32" fill="#04a7ef"/>
<rect x="288" y="736" width="32" height="32" fill="#04a6ef"/>
<rect x="320" y="736" width="32" height="32" fill="#04a5ee"/>
<rect x="352" y="736" width="32" height="32" fill="#04a4ee"/>
<rect x="384" y="736" width="32" height="32" fill="#04a3ed"/>
<rect x="416" y="736" width="32" height="32" fill="#04a2ec"/>
<rect x="448" y="736" width="32" height="32" fill="#04a1ec"/>
<rect x="480" y="736" width="32" height="32" fill="#04a0ec"/>
<rect x="512" y="736" width="32" height="32" fill="#049feb"/>
<rect x="544" y="736" width="32" height="32" fill="#049deb"/>
<rect x="576" y="736" width="32" height="32" fill="#049ceb"/>
<rect x="608" y="736" width="32" height="32" fill="#049beb"/>
<rect x="640" y="736" width="32" height="32" fill="#049aea"/>
<rect x="672" y="736" width="32" height="32" fill="#0498ea"/>
<rect x="704" y="736" width="32" height="32" fill="#0497ea"/>
<rect x="736" y="736" width="32" height="32" fill="#0496ea"/>
<rect x="768" y="736" width="32" height="32" fill="#0494ea"/>
<rect x="800" y="736" width="32" height="32" fill="#0493e9"/>
<rect x="832" y="736" width="32" height="32" fill="#0491e9"/>
<rect x="864" y="736" width="32" height="32" fill="#0490e9"/>
<rect x="896" y="736" width="32" height="32" fill="#048ee9"/>
<rect x="928" y="736" width="32" height="32" fill="#048de9"/>
<rect x="960" y="736" width="32" height="32" fill="#048ce9"/>
<rect x="992" y="736" width="32" height="32" fill="#048ae9"/>
<rect x="1024" y="736" width="32" height="32" fill="#0489e9"/>
<rect x="1056" y="736" width="32" height="32" fill="#0488e9"/>
<rect x="1088" y="736" width="32" height="32" fill="#0487e9"/>
<rect x="1120" y="736" width="32" height="32" fill="#0486e9"/>
<rect x="1152" y="736" width="32" height="32" fill="#0485ea"/>
<rect x="1184" y="736" width="32" height="32" fill="#0484ea"/>
<rect x="1216" y="736" width="32" height="32" fill="#0484eb"/>
<rect x="1248" y="736" width="32" height="32" fill="#0484ec"/>
<rect x="1280" y="736" width="32" height="32" fill="#0483ed"/>
<rect x="1312" y="736" width="32" height="32" fill="#0483ee"/>
<rect x="1344" y="736" width="32" height="32" fill="#0482ee"/>
<rect x="1376" y="736" width="32" height="32" fill="#0482ef"/>
</g></g>
<defs>
<linearGradient id="pane2" x1="0" y1="259" x2="0" y2="510" gradientUnits="userSpaceOnUse">
<stop offset="0" stop-color="#22acfe"/><stop offset="0.6" stop-color="#22a0fc"/><stop offset="1" stop-color="#2298f4"/></linearGradient>
<radialGradient id="rglow" cx="1098" cy="385" r="1" gradientUnits="userSpaceOnUse" gradientTransform="translate(1098 385) scale(30 150) translate(-1098 -385)">
<stop offset="0" stop-color="#0c80ff" stop-opacity="0.45"/><stop offset="1" stop-color="#0870f8" stop-opacity="0"/></radialGradient>
<radialGradient id="cglow" cx="1100" cy="268" r="170" gradientUnits="userSpaceOnUse">
<stop offset="0" stop-color="#0a7cff" stop-opacity="0.75"/><stop offset="0.35" stop-color="#0872fa" stop-opacity="0.35"/><stop offset="1" stop-color="#0660f0" stop-opacity="0"/></radialGradient>
</defs>
<circle cx="1100" cy="268" r="170" fill="url(#cglow)"/>
<ellipse cx="1098" cy="385" rx="30" ry="150" fill="url(#rglow)"/>
<path d="M849 382 L1096 382 L1096 388 L849 388 Z" fill="#0a7ae4"/>
<path d="M955 278 L960 276 L960 492 L955 490 Z" fill="#0a7ae4"/>
<g>
  <path d="M849 293 L955 278 L955 382 L849 382 Z" fill="url(#pane2)"/>
  <path d="M960 276 L1096 259 L1096 382 L960 382 Z" fill="url(#pane2)"/>
  <path d="M849 388 L955 388 L955 490 L849 476 Z" fill="url(#pane2)"/>
  <path d="M960 388 L1096 388 L1096 510 L960 492 Z" fill="url(#pane2)"/>
  <path d="M849 474 L1096 440 L1096 510 L960 492 L955 490 L849 476Z" fill="#1a88ec" opacity="0.25"/>
  <path d="M849 474 L1096 440" stroke="#50c8ff" stroke-width="1" opacity="0.5"/>
</g>
<g fill="none" stroke="#48d0ff" stroke-width="1.2" opacity="0.8" filter="url(#b1)">
  <path d="M849 293 L955 278 M849 382 L955 382 M960 276 L1096 259 M960 382 L1096 382"/>
  <path d="M849 388 L955 388 M849 476 L955 490 M960 388 L1096 388 M960 492 L1096 510"/>
</g>
<g fill="none" stroke="#58eaff" stroke-width="1.6" filter="url(#b1)">
  <path d="M849.5 293 V382 M954.5 278 V382 M960.5 276 V382 M1095.5 259 V382"/>
  <path d="M849.5 388 V476 M954.5 388 V490 M960.5 388 V492 M1095.5 388 V510"/>
</g>
<g fill="none" stroke="#5ad8ff" stroke-width="1.2" filter="url(#b1)">
  <path d="M674 134 L1095 259" opacity="0.45"/>
  <path d="M674 498 L849 476" opacity="0.5"/>
  <path d="M1095 510 L674 621" opacity="0.1"/>
</g>
</svg>

<!-- WINDOW -->
<div class="a" style="left:7px;top:0;width:667px;height:702px;background:#fff;box-shadow:0 0 0 1px rgba(0,0,0,.13),0 0 4px rgba(0,0,0,.12),2px 3px 20px rgba(0,0,0,.26)"></div>

<!-- QAT -->
<svg style="left:18px;top:7px" width="14" height="16" viewBox="0 0 14 16">
  <path d="M0.5 0.5H12.5V15.5H0.5Z" fill="#fde68a" stroke="#e3c46c" stroke-width="1"/>
  <path d="M10 10V15.5H12.5V10Z" fill="#f6d36c" stroke="#e3c46c" stroke-width="1"/>
</svg>
<div class="a" style="left:39px;top:10px;width:1px;height:11px;background:#8a8a8a"></div>
<svg style="left:51px;top:7px" width="12" height="17" viewBox="0 0 12 17">
  <path d="M0.5 0.5H8.5L11.5 3.5V16.5H0.5Z" fill="#f4f4f4" stroke="#7a7a7a" stroke-width="1"/>
  <path d="M8.5 0.5V3.5H11.5" fill="none" stroke="#7a7a7a" stroke-width="1"/>
  <path d="M3 9.8L5.2 12.2L9.5 6.5" fill="none" stroke="#e8703e" stroke-width="1.2"/>
</svg>
<svg style="left:73px;top:7px" width="14" height="16" viewBox="0 0 14 16">
  <path d="M0.5 0.5H12.5V15.5H0.5Z" fill="#fde68a" stroke="#e3c46c" stroke-width="1"/>
  <path d="M10 10V15.5H12.5V10Z" fill="#f6d36c" stroke="#e3c46c" stroke-width="1"/>
</svg>
<svg style="left:93px;top:13px" width="8" height="7" viewBox="0 0 8 7">
  <rect x="0" y="0" width="8" height="1.2" fill="#111"/>
  <path d="M1 2.5H7L4 6Z" fill="#111"/>
</svg>
<div class="a" style="left:109px;top:10px;width:1px;height:11px;background:#8a8a8a"></div>

<!-- Manage tab -->
<div class="a" style="left:237px;top:4px;width:95px;height:27px;background:#ecec86"></div>
<div class="t" style="left:263px;top:10.5px;color:#333">Manage</div>
<div class="t" style="left:345px;top:8.5px;color:#000;font-size:12px">DCIM</div>

<!-- caption buttons -->
<div class="a" style="left:554px;top:15px;width:11px;height:1px;background:#111"></div>
<div class="a" style="left:599px;top:10px;width:11px;height:11px;border:1px solid #111"></div>
<svg style="left:644px;top:9px" width="12" height="12" viewBox="0 0 12 12">
  <path d="M0.5 0.5L11.5 11.5M11.5 0.5L0.5 11.5" stroke="#111" stroke-width="1.1"/>
</svg>

<!-- ribbon tabs -->
<div class="a" style="left:8px;top:31px;width:55px;height:23px;background:#0063b1"></div>
<div class="t" style="left:26px;top:35.5px;color:#fff">File</div>
<div class="t" style="left:78px;top:35.5px;color:#3a3a3a">Home</div>
<div class="t" style="left:137px;top:35.5px;color:#3a3a3a;letter-spacing:-0.2px">Share</div>
<div class="t" style="left:195px;top:35.5px;color:#3a3a3a">View</div>
<div class="a" style="left:237px;top:31px;width:95px;height:23px;border-left:1px solid #dadada;border-right:1px solid #dadada"></div>
<div class="t" style="left:251px;top:35.5px;color:#3a3a3a;letter-spacing:-0.1px">Picture Tools</div>
<div class="a" style="left:7px;top:54px;width:666px;height:1px;background:#e2e2e2"></div>
<!-- ribbon chevron and help -->
<svg style="left:635px;top:39px" width="10" height="6" viewBox="0 0 10 6">
  <path d="M0.5 0.5L5 5L9.5 0.5" fill="none" stroke="#9a9a9a" stroke-width="1"/>
</svg>
<svg style="left:655px;top:35px" width="14" height="14" viewBox="0 0 14 14">
  <circle cx="7" cy="7" r="7" fill="#1979ca"/>
  <path d="M4.6 5.2C4.6 3.6 5.6 2.8 7.1 2.8C8.6 2.8 9.5 3.7 9.5 4.9C9.5 6.6 7.6 6.7 7.6 8.6" fill="none" stroke="#fff" stroke-width="1.6"/>
  <rect x="6.7" y="9.8" width="1.8" height="1.8" fill="#fff"/>
</svg>

<!-- nav arrows -->
<svg style="left:21px;top:66px" width="13" height="12" viewBox="0 0 13 12">
  <path d="M12 6H1.5M6.5 1L1.5 6L6.5 11" fill="none" stroke="#6b6b6b" stroke-width="1.6"/>
</svg>
<svg style="left:51px;top:66px" width="13" height="12" viewBox="0 0 13 12">
  <path d="M1 6H11.5M6.5 1L11.5 6L6.5 11" fill="none" stroke="#c8c8c8" stroke-width="1.6"/>
</svg>
<svg style="left:77px;top:69px" width="7" height="5" viewBox="0 0 7 5">
  <path d="M0.5 0.8L3.5 3.8L6.5 0.8" fill="none" stroke="#6b6b6b" stroke-width="1.2"/>
</svg>
<svg style="left:95px;top:65px" width="12" height="13" viewBox="0 0 12 13">
  <path d="M6 13V1.5M1 6.5L6 1.5L11 6.5" fill="none" stroke="#6b6b6b" stroke-width="1.6"/>
</svg>

<!-- address box -->
<div class="a" style="left:114px;top:61px;width:333px;height:22px;border:1px solid #d9d9d9"></div>
<div class="a" style="left:429px;top:62px;width:1px;height:20px;background:#d9d9d9"></div>
<svg style="left:119px;top:63px" width="14" height="16" viewBox="0 0 14 16">
  <path d="M0.5 0.5H12.5V15.5H0.5Z" fill="#fde68a" stroke="#e3c46c" stroke-width="1"/>
  <path d="M10 10V15.5H12.5V10Z" fill="#f6d36c" stroke="#e3c46c" stroke-width="1"/>
</svg>
<svg style="left:140px;top:69px" width="5" height="7" viewBox="0 0 5 7">
  <path d="M0.8 0.5L4 3.5L0.8 6.5" fill="none" stroke="#555" stroke-width="1.1"/>
</svg>
<div class="t" style="left:154px;top:65px;color:#000;letter-spacing:-0.5px">DRIVE (E:)</div>
<svg style="left:214px;top:69px" width="5" height="7" viewBox="0 0 5 7">
  <path d="M0.8 0.5L4 3.5L0.8 6.5" fill="none" stroke="#555" stroke-width="1.1"/>
</svg>
<div class="t" style="left:228px;top:65px;color:#000">DCIM</div>
<svg style="left:417px;top:70px" width="9" height="6" viewBox="0 0 9 6">
  <path d="M0.8 0.8L4.5 4.8L8.2 0.8" fill="none" stroke="#555" stroke-width="1.4"/>
</svg>
<svg style="left:433px;top:66px" width="12" height="12" viewBox="0 0 12 12">
  <path d="M8.8 2.6A4.5 4.5 0 1 1 3.2 2.6" fill="none" stroke="#666" stroke-width="1.4"/>
  <path d="M2 0.5V4H5.5" fill="none" stroke="#666" stroke-width="1.3"/>
</svg>

<!-- search box -->
<div class="a" style="left:459px;top:61px;width:202px;height:22px;border:1px solid #d9d9d9"></div>
<div class="t" style="left:468px;top:65px;color:#6d6d6d">Search DCIM</div>
<svg style="left:640px;top:67px" width="13" height="12" viewBox="0 0 13 12">
  <circle cx="8" cy="4.5" r="3.6" fill="none" stroke="#666" stroke-width="1.3"/>
  <path d="M5.5 7L1 11.3" stroke="#666" stroke-width="1.8"/>
</svg>

<!-- nav pane -->
<div class="a" style="left:166px;top:88px;width:1px;height:590px;background:#f0f0f0"></div>
<div class="a" style="left:8px;top:202px;width:156px;height:24px;background:#d9d9d9"></div>
<svg style="left:33px;top:110px" width="17" height="15" viewBox="33 110 17 15">
  <path d="M43.2 110.8 L44.6 114.6 L48.8 114.8 L45.6 117.4 L46.8 121.6 L43.2 119.2 L39.4 121.8 L40.6 117.6 L37.4 114.9 L41.6 114.6 Z" fill="#3d9ff0" stroke="#3d9ff0" stroke-width="0.6" stroke-linejoin="round"/>
  <path d="M34.5 118.8 H38.6 M35 120.8 H39.2 M35.8 122.8 H38.8" stroke="#8cc8f4" stroke-width="0.9"/>
</svg>
<div class="t" style="left:53px;top:111px;color:#000">Quick access</div>
<svg style="left:34px;top:142px" width="14" height="17" viewBox="0 0 14 17">
  <path d="M0.5 0.5H12.5V15.5H0.5Z" fill="#fde68a" stroke="#e3c46c" stroke-width="1"/>
  <path d="M10 10V15.5H12.5V10Z" fill="#f6d36c" stroke="#e3c46c" stroke-width="1"/>
</svg>
<div class="t" style="left:53px;top:143px;color:#000">OneDrive</div>
<svg style="left:30px;top:172px" width="20" height="20" viewBox="30 172 20 20">
  <defs><linearGradient id="scr" x1="0" y1="0" x2="1" y2="1"><stop offset="0" stop-color="#8ed0fa"/><stop offset="1" stop-color="#2aa6f2"/></linearGradient></defs>
  <rect x="32.5" y="175.5" width="15" height="9" fill="url(#scr)" stroke="#2f6f9e" stroke-width="1"/>
  <rect x="39" y="185" width="2" height="1" fill="#9ab4c8"/>
  <rect x="36" y="186" width="8" height="1" fill="#55687a"/>
  <rect x="32" y="188.8" width="16" height="1.2" fill="#8a9cac"/>
</svg>
<div class="t" style="left:53px;top:175px;color:#000">This PC</div>
<svg style="left:33px;top:215px" width="14" height="5" viewBox="0 0 14 5">
  <rect x="0" y="0.5" width="13" height="4" rx="1" fill="#3a3a3a"/>
  <rect x="10" y="2" width="1.5" height="1.5" fill="#4ade4a"/>
</svg>
<div class="t" style="left:53px;top:207px;color:#000;letter-spacing:-0.5px">DRIVE (E:)</div>
<svg style="left:30px;top:236px" width="20" height="20" viewBox="30 236 20 20">
  <defs><radialGradient id="glb" cx="0.35" cy="0.3" r="0.8"><stop offset="0" stop-color="#b8e8fc"/><stop offset="0.5" stop-color="#4a9ccc"/><stop offset="1" stop-color="#1f5a84"/></radialGradient></defs>
  <circle cx="42.4" cy="243.4" r="5.4" fill="url(#glb)"/>
  <rect x="32.5" y="244.5" width="11" height="7.5" fill="url(#scr)" stroke="#2f6f9e" stroke-width="1"/>
  <rect x="35" y="253" width="6" height="1" fill="#55687a"/>
</svg>
<div class="t" style="left:53px;top:239px;color:#000">Network</div>

<!-- column headers -->
<div class="t" style="left:185px;top:96px;color:#4c607a;letter-spacing:0.6px">Name</div>
<svg style="left:305px;top:90px" width="9" height="5" viewBox="0 0 9 5">
  <path d="M0.5 4.5L4.5 0.5L8.5 4.5" fill="none" stroke="#777" stroke-width="1"/>
</svg>
<div class="a" style="left:439px;top:90px;width:1px;height:25px;background:#e5e5e5"></div>
<div class="t" style="left:446px;top:96px;color:#4c607a;letter-spacing:0.35px">Date modified</div>
<div class="a" style="left:583px;top:90px;width:1px;height:25px;background:#e5e5e5"></div>
<div class="t" style="left:590px;top:96px;color:#4c607a">Type</div>

<!-- rows -->
<div class="a" style="left:182px;top:121px;width:491px;height:22px;background:#cce8ff;border:1px solid #99d1ff;border-right:none"></div>
<svg style="left:186px;top:125px" width="16" height="10" viewBox="0 0 16 10">
  <defs><linearGradient id="ph1" x1="0" y1="0" x2="1" y2="1"><stop offset="0" stop-color="#3a4048"/><stop offset="0.5" stop-color="#20252c"/><stop offset="1" stop-color="#2c3138"/></linearGradient></defs>
  <rect x="0" y="0" width="16" height="10" fill="url(#ph1)"/>
  <rect x="1" y="2" width="3" height="5" fill="#6a7078" opacity="0.7"/>
  <rect x="2" y="6" width="2" height="3" fill="#9aa0a6" opacity="0.6"/>
  <rect x="5" y="1" width="2" height="8" fill="#15181c"/>
  <rect x="9" y="0" width="7" height="3" fill="#a8acb2" opacity="0.7"/>
  <rect x="10" y="3" width="4" height="3" fill="#c8ccd0" opacity="0.6"/>
</svg>
<div class="t" style="left:206px;top:124.5px;color:#000;letter-spacing:0.5px">photo</div>
<div class="t" style="left:446px;top:124.5px;color:#6d6d6d">26/03/2012 11:34</div>
<div class="a" style="left:586px;top:122px;width:87px;height:20px;overflow:hidden"><div class="t" style="left:4px;top:2.5px;color:#6d6d6d;letter-spacing:0.35px">Apowersoft Photo Viewer</div></div>
<svg style="left:188px;top:144px" width="12" height="16" viewBox="0 0 12 16">
  <path d="M0.5 0.5H8.5L11.5 3.5V15.5H0.5Z" fill="#fff" stroke="#8a8a8a" stroke-width="1"/>
  <rect x="2" y="5" width="8" height="7" fill="#1f8ad8"/>
  <rect x="2" y="5" width="8" height="1.5" fill="#0f6ab8"/>
  <path d="M5 7L8 9L5 11Z" fill="#fff"/>
</svg>
<div class="t" style="left:206px;top:144.5px;color:#000;letter-spacing:0.3px">video</div>
<div class="t" style="left:446px;top:145.5px;color:#6d6d6d">26/03/2012 11:27</div>
<div class="t" style="left:590px;top:145.5px;color:#6d6d6d">MP4 File</div>

<!-- horizontal scrollbar -->
<div class="a" style="left:168px;top:662px;width:505px;height:16px;background:#f0f0f0"></div>
<div class="a" style="left:185px;top:662px;width:380px;height:16px;background:#cdcdcd"></div>
<svg style="left:173px;top:666px" width="7" height="8" viewBox="0 0 7 8">
  <path d="M5.5 0.8L1.8 4L5.5 7.2" fill="none" stroke="#555" stroke-width="1.8"/>
</svg>
<svg style="left:662px;top:666px" width="7" height="8" viewBox="0 0 7 8">
  <path d="M1.5 0.8L5.2 4L1.5 7.2" fill="none" stroke="#555" stroke-width="1.8"/>
</svg>

<!-- status bar -->
<div class="t" style="left:22px;top:683px;color:#1e395b">2 items</div>
<div class="a" style="left:70px;top:684px;width:1px;height:11px;background:#eaeaea"></div>
<div class="t" style="left:81px;top:683px;color:#1e395b">1 item selected</div>
<div class="t" style="left:166px;top:683px;color:#1e395b">4.40 MB</div>
<div class="a" style="left:218px;top:684px;width:1px;height:11px;background:#eaeaea"></div>
<div class="a" style="left:625px;top:678px;width:22px;height:23px;background:#cce8ff;border:1px solid #3c9ad8"></div>
<svg style="left:629px;top:684px" width="16" height="12" viewBox="0 0 16 12">
  <rect x="0.5" y="0.5" width="2.5" height="2.5" fill="#fff" stroke="#888" stroke-width="0.8"/>
  <rect x="0.5" y="4.5" width="2.5" height="2.5" fill="#fff" stroke="#888" stroke-width="0.8"/>
  <rect x="0.5" y="8.5" width="2.5" height="2.5" fill="#fff" stroke="#888" stroke-width="0.8"/>
  <path d="M5 1.8H9M11 1.8H15M5 5.8H9M11 5.8H15M5 9.8H9M11 9.8H15" stroke="#666" stroke-width="1"/>
</svg>
<svg style="left:651px;top:683px" width="14" height="11" viewBox="0 0 14 11">
  <rect x="0.5" y="0.5" width="13" height="10" fill="#fff" stroke="#8a8a8a" stroke-width="1"/>
  <defs><linearGradient id="lsk" x1="0" y1="0" x2="0" y2="1"><stop offset="0" stop-color="#5a8ab8"/><stop offset="0.5" stop-color="#a8c8dc"/><stop offset="1" stop-color="#3a5868"/></linearGradient></defs>
  <rect x="2" y="2" width="10" height="7" fill="url(#lsk)"/>
  <path d="M2 6.5L5 5L12 7V9H2Z" fill="#2c4a5a" opacity="0.8"/>
</svg>

<!-- TASKBAR -->
<div class="a" style="left:0;top:728px;width:1366px;height:40px;background:#111111"></div>
<div class="a" style="left:0;top:728px;width:1366px;height:1px;background:#0b1830"></div>
<!-- start -->
<svg style="left:15px;top:739px" width="18" height="18" viewBox="15 739 18 18">
  <path d="M15.7 742.3 L22 741.2 L22 747 L15.7 747 Z" fill="#fff"/>
  <path d="M22.9 741 L32.2 739.7 L32.2 747 L22.9 747 Z" fill="#fff"/>
  <path d="M15.7 748 L22 748 L22 754.8 L15.7 754 Z" fill="#fff"/>
  <path d="M22.9 748 L32.2 748 L32.2 756.2 L22.9 755 Z" fill="#fff"/>
</svg>
<!-- search -->
<svg style="left:60px;top:736px" width="24" height="24" viewBox="60 736 24 24">
  <circle cx="74.3" cy="745.6" r="5.1" fill="none" stroke="#fff" stroke-width="1.1"/>
  <path d="M70.6 749.4 L64.2 755.8" stroke="#fff" stroke-width="1.3" stroke-linecap="round"/>
</svg>
<!-- cortana -->
<svg style="left:110px;top:738px" width="20" height="20" viewBox="110 738 20 20">
  <circle cx="120" cy="748" r="6.9" fill="none" stroke="#fff" stroke-width="1.7"/>
</svg>
<!-- explorer active -->
<div class="a" style="left:147px;top:728px;width:48px;height:40px;background:#333333"></div>
<div class="a" style="left:147px;top:766px;width:48px;height:2px;background:#76b9ed"></div>
<svg style="left:158px;top:736px" width="26" height="24" viewBox="158 736 26 24">
  <path d="M160 738.2 H168 L169.5 740 H160 Z" fill="#e2a50e"/>
  <path d="M160 740 H181.4 V756.2 H160 Z" fill="#f8cf5a"/>
  <path d="M160 740 H168.5 L169.8 741.8 H181.4 V742.6 H160 Z" fill="#eab020"/>
  <path d="M164 749 H178 V757 H174 V752.5 H168 V757 H164 Z" fill="#3c9ee6"/>
  <path d="M168 752.5 H174 V756.2 H168 Z" fill="#f4c94a"/>
</svg>
<!-- IE -->
<svg style="left:204px;top:732px" width="32" height="30" viewBox="204 732 32 30">
  <defs><linearGradient id="ieg" x1="0" y1="0" x2="0.4" y2="1"><stop offset="0" stop-color="#4ab8ec"/><stop offset="0.45" stop-color="#8ae6fc"/><stop offset="1" stop-color="#3aaee6"/></linearGradient>
  <linearGradient id="ier" x1="0" y1="1" x2="1" y2="0"><stop offset="0" stop-color="#c89a18"/><stop offset="0.4" stop-color="#f4d040"/><stop offset="1" stop-color="#d8a820"/></linearGradient></defs>
  <ellipse cx="221.2" cy="748.3" rx="9.8" ry="10" fill="url(#ieg)"/>
  <path d="M216.7 745.8 C217.2 743.6 218.9 742.4 221 742.4 C223.1 742.4 224.8 743.6 225.3 745.8 Z M216.6 749.2 H233 V752.9 H225 C222.5 753.5 219.6 753.3 217.9 751.7 C217.2 751 216.8 750.1 216.6 749.2 Z" fill="#111"/>
  <path d="M210.2 757.4 C207.6 755 210 747.5 216.5 742.2 C222.5 737.3 229 735.8 230.2 738 C230.7 739 230.2 740.2 229.6 741" fill="none" stroke="url(#ier)" stroke-width="2.3" stroke-linecap="round"/>
</svg>
<!-- chrome -->
<svg style="left:256px;top:735px" width="26" height="26" viewBox="256 735 26 26">
  <circle cx="269" cy="747.8" r="11.3" fill="#db4437"/>
  <path d="M269 747.8 L259.2 742.2 A11.3 11.3 0 0 0 263.4 757.6 Z" fill="#0f9d58"/>
  <path d="M269 747.8 L263.4 757.6 A11.3 11.3 0 0 0 280.3 747.8 L279 742.2 Z" fill="#0f9d58"/>
  <path d="M269 747.8 L269 759.1 A11.3 11.3 0 0 0 278.8 742.2 L269 742.2 Z" fill="#ffcd40"/>
  <path d="M269 742.2 L278.8 742.2 L272 759 Z" fill="#ffcd40"/>
  <path d="M269 736.5 A11.3 11.3 0 0 1 278.8 742.2 L269 742.2 L264.1 750.6 L259.2 742.2 A11.3 11.3 0 0 1 269 736.5 Z" fill="#db4437"/>
  <path d="M259.2 742.2 L264.1 750.6 L269 742.2 Z" fill="#db4437"/>
  <circle cx="269" cy="747.8" r="5.5" fill="#fff"/>
  <circle cx="269" cy="747.8" r="4.4" fill="#4285f4"/>
</svg>
<!-- itunes -->
<svg style="left:305px;top:735px" width="26" height="26" viewBox="305 735 26 26">
  <defs><linearGradient id="itg" x1="0" y1="0" x2="0" y2="1"><stop offset="0" stop-color="#f5435a"/><stop offset="1" stop-color="#8a5cf0"/></linearGradient>
  <linearGradient id="itr" x1="0" y1="0" x2="0" y2="1"><stop offset="0" stop-color="#f06a8a"/><stop offset="1" stop-color="#9a5cf0"/></linearGradient></defs>
  <circle cx="318.1" cy="748" r="10.6" fill="#f4f2f6" stroke="url(#itr)" stroke-width="1"/>
  <path d="M315 741.8 L323.2 740.4 V751.6 A1.9 1.6 0 1 1 321.6 750.2 V743.8 L316.6 744.6 V753.2 A1.9 1.6 0 1 1 315 751.8 Z" fill="url(#itg)"/>
</svg>
<!-- tray -->
<svg style="left:1110px;top:736px" width="100" height="26" viewBox="1110 736 100 26">
  <path d="M1117 751 L1123 745 L1129 751" fill="none" stroke="#fff" stroke-width="1.1"/>
  <rect x="1140.5" y="744.5" width="13.5" height="8.5" fill="none" stroke="#fff" stroke-width="1"/>
  <rect x="1142" y="746.3" width="10.6" height="4.8" fill="#fff"/>
  <rect x="1154.2" y="747" width="1.3" height="3.2" fill="#fff"/>
  <path d="M1163.5 746.3 H1166.3 L1169 743 V753.6 L1166.3 750.3 H1163.5 Z" fill="none" stroke="#fff" stroke-width="1"/>
  <path d="M1171 746.2 A2.6 2.6 0 0 1 1171 750.6" fill="none" stroke="#fff" stroke-width="1"/>
  <path d="M1173.2 744 A5.5 5.5 0 0 1 1173.2 752.8" fill="none" stroke="#ccc" stroke-width="1"/>
  <path d="M1175.6 741.6 A8.6 8.6 0 0 1 1175.6 755.2" fill="none" stroke="#9a9a9a" stroke-width="1"/>
  <path d="M1201 746 A7.5 7.5 0 0 0 1193.5 753.5" fill="none" stroke="#fff" stroke-width="1.1"/>
  <path d="M1201 743 A10.5 10.5 0 0 0 1190.5 753.5" fill="none" stroke="#fff" stroke-width="1.1"/>
  <path d="M1201 749 A4.5 4.5 0 0 0 1196.5 753.5" fill="none" stroke="#fff" stroke-width="1.1"/>
  <circle cx="1200.6" cy="753.3" r="1.4" fill="#fff"/>
</svg>
<svg style="left:1320px;top:736px" width="26" height="24" viewBox="1320 736 26 24">
  <path d="M1325.5 740.5 H1340.5 V753 H1335.6 L1332.9 755.6 L1330.2 753 H1325.5 Z" fill="none" stroke="#fff" stroke-width="1.1"/>
</svg>
<div class="a" style="left:1361px;top:728px;width:1px;height:40px;background:#6e6e6e"></div>

</body></html>
